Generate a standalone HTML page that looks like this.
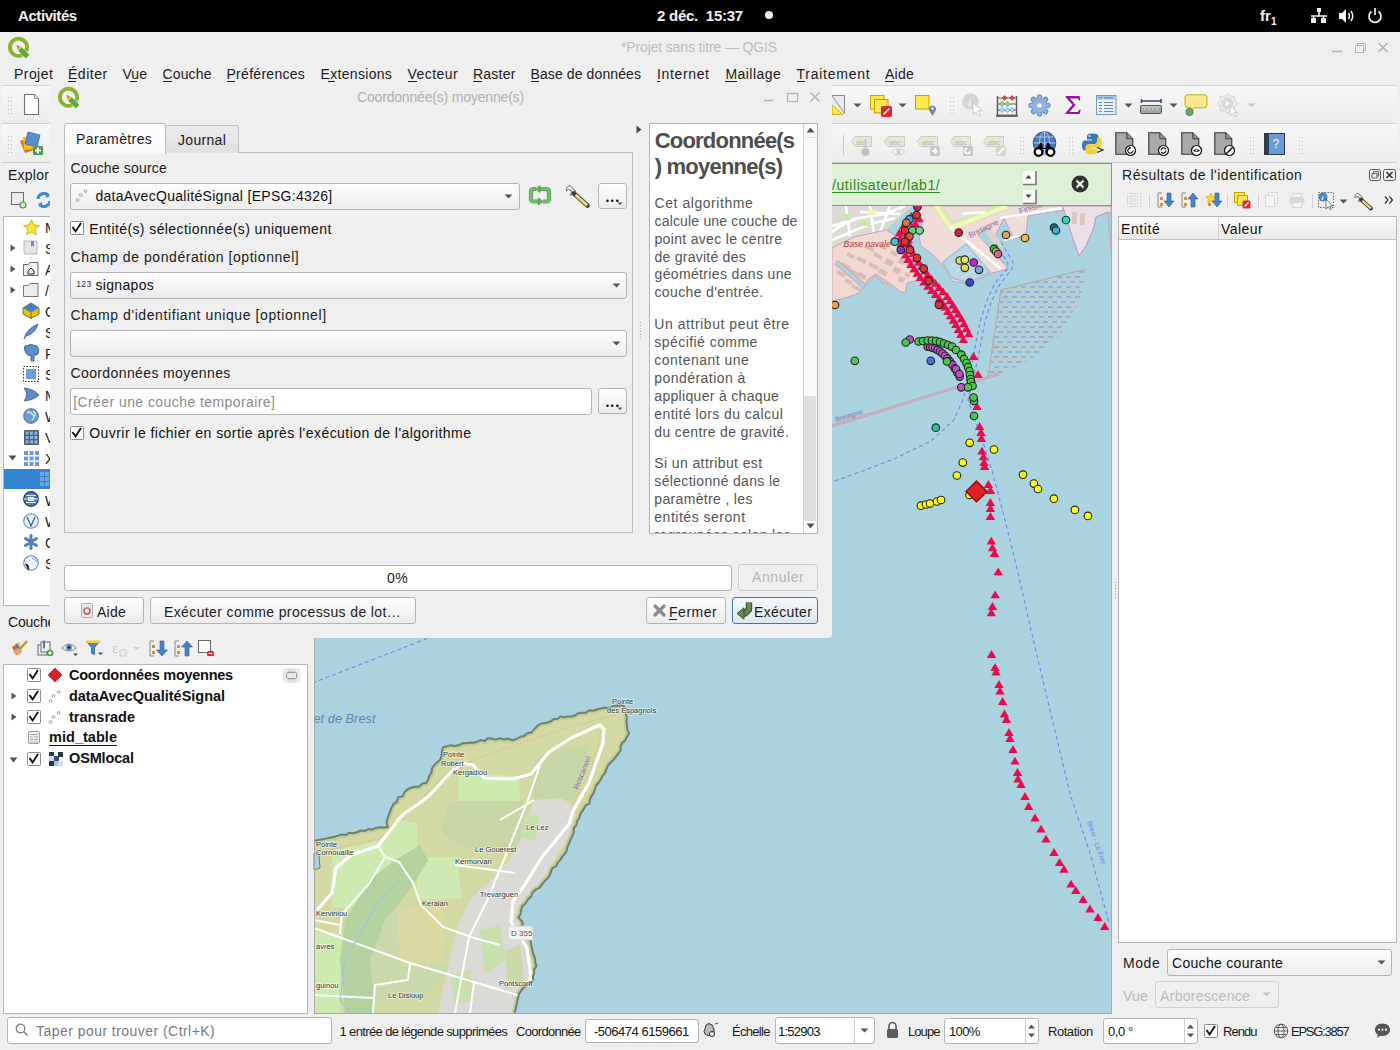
<!DOCTYPE html>
<html><head><meta charset="utf-8"><style>
html,body{margin:0;padding:0;width:1400px;height:1050px;overflow:hidden;background:#efefef;}
body{position:relative;font-family:"Liberation Sans",sans-serif;}
.t{position:absolute;white-space:nowrap;}
svg{position:absolute;overflow:visible;}
</style></head><body>
<div style="position:absolute;left:0px;top:0px;width:1400px;height:32px;background:#000;"></div>
<div class="t" style="left:18.00px;top:8.30px;font-size:15px;line-height:15px;color:#f2f2f2;font-weight:700;letter-spacing:-0.415px;">Activités</div>
<div class="t" style="left:657.00px;top:8.30px;font-size:15px;line-height:15px;color:#f2f2f2;font-weight:700;letter-spacing:-0.258px;white-space:pre;">2 déc.  15:37</div>
<div style="position:absolute;left:765px;top:11px;width:8px;height:8px;background:#eee;border-radius:50%;"></div>
<div class="t" style="left:1260.00px;top:8.30px;font-size:15px;line-height:15px;color:#f2f2f2;font-weight:700;letter-spacing:0.112px;">fr</div>
<div class="t" style="left:1271.00px;top:16.54px;font-size:10px;line-height:10px;color:#f2f2f2;font-weight:700;">1</div>
<svg style="left:1310px;top:7px" width="18" height="17" viewBox="0 0 18 17"><rect x="7" y="1" width="4" height="4" fill="#f2f2f2"/><rect x="1" y="11" width="5" height="5" fill="#f2f2f2"/><rect x="11" y="11" width="5" height="5" fill="#f2f2f2"/><path d="M9 5v4M1 9h16M3.5 9v3M13.5 9v3" stroke="#f2f2f2" stroke-width="1.6" fill="none"/></svg>
<svg style="left:1338px;top:8px" width="18" height="16" viewBox="0 0 18 16"><path d="M1 5h3l4-4v14l-4-4H1z" fill="#f2f2f2"/><path d="M10.5 5q2 3 0 6M13 3q3.5 5 0 10" stroke="#f2f2f2" stroke-width="1.5" fill="none"/></svg>
<svg style="left:1367px;top:7px" width="16" height="17" viewBox="0 0 16 17"><path d="M4.5 4.5a6 6 0 1 0 7 0" stroke="#f2f2f2" stroke-width="1.7" fill="none"/><path d="M8 1v7" stroke="#f2f2f2" stroke-width="1.7"/></svg>
<div style="position:absolute;left:0px;top:32px;width:1400px;height:1018px;background:#efefef;"></div>
<svg style="left:8px;top:37px" width="23" height="23" viewBox="0 0 23 23"><path d="M14.1 18.1A8.6 8.6 0 1 1 18.3 13.9" stroke="#89b52c" stroke-width="3.8" fill="none"/><path d="M8.6 8.1L13.8 10.2L21.4 17.8L17.8 21.4L10.2 13.8Z" fill="#62a744"/><path d="M8.6 8.1L11.9 9.4L9.4 11.9Z" fill="#ef7d22"/><path d="M11.9 9.4L13.8 10.2L10.2 13.8L9.4 11.9Z" fill="#f1d12c"/></svg>
<div class="t" style="left:621.00px;top:40.15px;font-size:14px;line-height:14px;color:#bdbdbd;letter-spacing:-0.143px;">*Projet sans titre — QGIS</div>
<svg style="left:1330px;top:40px" width="62" height="16" viewBox="0 0 62 16"><path d="M2 11.5h10" stroke="#b3b3b3" stroke-width="1.6"/><rect x="25.5" y="5.5" width="8" height="7" stroke="#b3b3b3" fill="none" stroke-width="1"/><path d="M27.5 5.5v-2h8v7h-2" stroke="#b3b3b3" fill="none" stroke-width="1"/><path d="M48.5 3l9 9M57.5 3l-9 9" stroke="#b3b3b3" stroke-width="1.6"/></svg>
<div class="t" style="left:14.00px;top:66.65px;font-size:14px;line-height:14px;color:#1b1b1b;letter-spacing:0.441px;">Projet</div>
<div class="t" style="left:68.00px;top:66.65px;font-size:14px;line-height:14px;color:#1b1b1b;letter-spacing:0.532px;">Éditer</div>
<div class="t" style="left:122.50px;top:66.65px;font-size:14px;line-height:14px;color:#1b1b1b;letter-spacing:0.044px;">Vue</div>
<div class="t" style="left:162.50px;top:66.65px;font-size:14px;line-height:14px;color:#1b1b1b;letter-spacing:0.135px;">Couche</div>
<div class="t" style="left:226.50px;top:66.65px;font-size:14px;line-height:14px;color:#1b1b1b;letter-spacing:0.287px;">Préférences</div>
<div class="t" style="left:320.50px;top:66.65px;font-size:14px;line-height:14px;color:#1b1b1b;letter-spacing:0.318px;">Extensions</div>
<div class="t" style="left:407.50px;top:66.65px;font-size:14px;line-height:14px;color:#1b1b1b;letter-spacing:0.465px;">Vecteur</div>
<div class="t" style="left:473.00px;top:66.65px;font-size:14px;line-height:14px;color:#1b1b1b;letter-spacing:0.230px;">Raster</div>
<div class="t" style="left:530.50px;top:66.65px;font-size:14px;line-height:14px;color:#1b1b1b;letter-spacing:0.105px;">Base de données</div>
<div class="t" style="left:657.00px;top:66.65px;font-size:14px;line-height:14px;color:#1b1b1b;letter-spacing:0.643px;">Internet</div>
<div class="t" style="left:725.40px;top:66.65px;font-size:14px;line-height:14px;color:#1b1b1b;letter-spacing:0.475px;">Maillage</div>
<div class="t" style="left:796.50px;top:66.65px;font-size:14px;line-height:14px;color:#1b1b1b;letter-spacing:0.748px;">Traitement</div>
<div class="t" style="left:885.00px;top:66.65px;font-size:14px;line-height:14px;color:#1b1b1b;letter-spacing:0.280px;">Aide</div>
<div style="position:absolute;left:34.5px;top:81px;width:4px;height:1px;box-sizing:border-box;background:#1b1b1b;"></div><div style="position:absolute;left:68px;top:81px;width:8px;height:1px;box-sizing:border-box;background:#1b1b1b;"></div><div style="position:absolute;left:130px;top:81px;width:7px;height:1px;box-sizing:border-box;background:#1b1b1b;"></div><div style="position:absolute;left:162.5px;top:81px;width:9px;height:1px;box-sizing:border-box;background:#1b1b1b;"></div><div style="position:absolute;left:226.5px;top:81px;width:8.5px;height:1px;box-sizing:border-box;background:#1b1b1b;"></div><div style="position:absolute;left:328px;top:81px;width:7px;height:1px;box-sizing:border-box;background:#1b1b1b;"></div><div style="position:absolute;left:407.5px;top:81px;width:9px;height:1px;box-sizing:border-box;background:#1b1b1b;"></div><div style="position:absolute;left:473px;top:81px;width:8.5px;height:1px;box-sizing:border-box;background:#1b1b1b;"></div><div style="position:absolute;left:530.5px;top:81px;width:8.5px;height:1px;box-sizing:border-box;background:#1b1b1b;"></div><div style="position:absolute;left:657px;top:81px;width:2.5px;height:1px;box-sizing:border-box;background:#1b1b1b;"></div><div style="position:absolute;left:725.4px;top:81px;width:12px;height:1px;box-sizing:border-box;background:#1b1b1b;"></div><div style="position:absolute;left:796.5px;top:81px;width:8.5px;height:1px;box-sizing:border-box;background:#1b1b1b;"></div><div style="position:absolute;left:885px;top:81px;width:9px;height:1px;box-sizing:border-box;background:#1b1b1b;"></div>
<div style="position:absolute;left:2px;top:85px;width:1395px;height:39px;box-sizing:border-box;background:linear-gradient(#f7f7f7,#ececec);border-top:1px solid #d2d2d2;border-bottom:1px solid #cfcfcf;"></div>
<div style="position:absolute;left:2px;top:124px;width:1395px;height:39px;box-sizing:border-box;background:linear-gradient(#f7f7f7,#ececec);border-bottom:1px solid #cfcfcf;"></div>
<svg style="left:8px;top:97px" width="5" height="20" viewBox="0 0 5 20"><rect x="0" y="0" width="1" height="1" fill="#b8b8b8"/><rect x="3" y="0" width="1" height="1" fill="#b8b8b8"/><rect x="0" y="4" width="1" height="1" fill="#b8b8b8"/><rect x="3" y="4" width="1" height="1" fill="#b8b8b8"/><rect x="0" y="8" width="1" height="1" fill="#b8b8b8"/><rect x="3" y="8" width="1" height="1" fill="#b8b8b8"/><rect x="0" y="12" width="1" height="1" fill="#b8b8b8"/><rect x="3" y="12" width="1" height="1" fill="#b8b8b8"/><rect x="0" y="16" width="1" height="1" fill="#b8b8b8"/><rect x="3" y="16" width="1" height="1" fill="#b8b8b8"/></svg>
<svg style="left:23px;top:93px" width="17" height="23" viewBox="0 0 17 23"><path d="M1.5 1.5h10l4 4v16h-14z" fill="#fff" stroke="#6e6e6e" stroke-width="1.1"/><path d="M11.5 1.5v4h4" fill="#e8e8e8" stroke="#8a8a8a" stroke-width="0.9"/></svg>
<svg style="left:8px;top:136px" width="5" height="20" viewBox="0 0 5 20"><rect x="0" y="0" width="1" height="1" fill="#b8b8b8"/><rect x="3" y="0" width="1" height="1" fill="#b8b8b8"/><rect x="0" y="4" width="1" height="1" fill="#b8b8b8"/><rect x="3" y="4" width="1" height="1" fill="#b8b8b8"/><rect x="0" y="8" width="1" height="1" fill="#b8b8b8"/><rect x="3" y="8" width="1" height="1" fill="#b8b8b8"/><rect x="0" y="12" width="1" height="1" fill="#b8b8b8"/><rect x="3" y="12" width="1" height="1" fill="#b8b8b8"/><rect x="0" y="16" width="1" height="1" fill="#b8b8b8"/><rect x="3" y="16" width="1" height="1" fill="#b8b8b8"/></svg>
<svg style="left:19px;top:131px" width="25" height="25" viewBox="0 0 25 25"><path d="M1 10l12-4 5 12-12 4z" fill="#e06a20"/><path d="M4 6l11-1 1 13-11 1z" fill="#f0c010"/><path d="M9 1l12 3-3 12-12-3z" fill="#5b8fd0" stroke="#3a6aa8" stroke-width="0.8"/><rect x="14" y="15" width="10" height="9" rx="1.5" fill="#4d9a4d"/><path d="M19 16.5v6M16 19.5h6" stroke="#fff" stroke-width="2"/></svg>
<svg style="left:832px;top:95px" width="14" height="21" viewBox="0 0 14 21"><path d="M0 0.5h12.5v17.5" fill="#ececec" stroke="#888" stroke-width="1"/><rect x="0" y="0.5" width="12.5" height="18" fill="#ebebeb"/><path d="M0 0.5h12.5v18" fill="none" stroke="#888" stroke-width="1"/><path d="M0 10l11 9.5H0z" fill="#fde84f" stroke="#c8a000" stroke-width="0.8"/><path d="M0 0.5l12.5 18" stroke="#888" stroke-width="0.9"/></svg>
<svg style="left:853px;top:103px" width="9" height="5" viewBox="0 0 9 5"><path d="M0.5 0.5h8l-4 4z" fill="#555"/></svg>
<svg style="left:870px;top:95px" width="23" height="23" viewBox="0 0 23 23"><rect x="0.5" y="0.5" width="13.5" height="13.5" fill="#fde84f" stroke="#c8a000"/><rect x="4.5" y="4.5" width="13.5" height="13.5" fill="#fde84f" stroke="#c8a000"/><rect x="11" y="11" width="11" height="11" rx="2" fill="#e02828"/><path d="M13.5 19.5l6-6" stroke="#fff" stroke-width="1.6"/></svg>
<svg style="left:898px;top:103px" width="9" height="5" viewBox="0 0 9 5"><path d="M0.5 0.5h8l-4 4z" fill="#555"/></svg>
<svg style="left:915px;top:95px" width="23" height="23" viewBox="0 0 23 23"><rect x="0.5" y="0.5" width="13.5" height="13.5" fill="#fde84f" stroke="#c8a000"/><path d="M17.5 21l-3-5a3.5 3.5 0 1 1 6 0z" fill="#6c8aa6"/><circle cx="17.5" cy="13.5" r="1.2" fill="#fff"/></svg>
<svg style="left:950px;top:97px" width="5" height="20" viewBox="0 0 5 20"><rect x="0" y="0" width="1" height="1" fill="#b8b8b8"/><rect x="3" y="0" width="1" height="1" fill="#b8b8b8"/><rect x="0" y="4" width="1" height="1" fill="#b8b8b8"/><rect x="3" y="4" width="1" height="1" fill="#b8b8b8"/><rect x="0" y="8" width="1" height="1" fill="#b8b8b8"/><rect x="3" y="8" width="1" height="1" fill="#b8b8b8"/><rect x="0" y="12" width="1" height="1" fill="#b8b8b8"/><rect x="3" y="12" width="1" height="1" fill="#b8b8b8"/><rect x="0" y="16" width="1" height="1" fill="#b8b8b8"/><rect x="3" y="16" width="1" height="1" fill="#b8b8b8"/></svg>
<svg style="left:962px;top:93px" width="25" height="24" viewBox="0 0 25 24"><circle cx="8.5" cy="8.5" r="8.3" fill="#d6d6d6"/><text x="6" y="13" font-size="11" font-style="italic" font-weight="700" fill="#f2f2f2" font-family="Liberation Serif">i</text><path d="M11 10l0 12 3-3 3 4.5 2-1.2-3-4.5h4.5z" fill="#fafafa" stroke="#c4c4c4" stroke-width="0.9"/></svg>
<svg style="left:996px;top:95px" width="22" height="22" viewBox="0 0 22 22"><path d="M1.5 1v20M20.5 1v20" stroke="#555" stroke-width="1.4"/><path d="M1.5 3h19M1.5 9h19M1.5 15h19" stroke="#666" stroke-width="1"/><rect x="0" y="19.5" width="22" height="2.5" rx="1" fill="#666"/><path d="M8.5 0.5l2.5 2.5-2.5 2.5-2.5-2.5z" fill="#e04848" stroke="#c02020" stroke-width="0.6"/><path d="M16 0.5l2.5 2.5-2.5 2.5-2.5-2.5z" fill="#e04848" stroke="#c02020" stroke-width="0.6"/><path d="M6 6.5l2.5 2.5-2.5 2.5-2.5-2.5z" fill="#90d090" stroke="#40a040" stroke-width="0.6"/><path d="M11.5 6.5l2.5 2.5-2.5 2.5-2.5-2.5z" fill="#90d090" stroke="#40a040" stroke-width="0.6"/><path d="M6 12.5l2.5 2.5-2.5 2.5-2.5-2.5z" fill="#b0d8f0" stroke="#5090c0" stroke-width="0.6"/><path d="M11.2 12.5l2.5 2.5-2.5 2.5-2.5-2.5z" fill="#b0d8f0" stroke="#5090c0" stroke-width="0.6"/><path d="M16.3 12.5l2.5 2.5-2.5 2.5-2.5-2.5z" fill="#b0d8f0" stroke="#5090c0" stroke-width="0.6"/></svg>
<svg style="left:1028px;top:93.5px" width="23" height="23" viewBox="0 0 23 23"><g fill="#8db2e2" stroke="#4a86d0" stroke-width="1"><rect x="9.3" y="0.8" width="4.4" height="6" rx="2" transform="rotate(0 11.5 11.5)"/><rect x="9.3" y="0.8" width="4.4" height="6" rx="2" transform="rotate(45 11.5 11.5)"/><rect x="9.3" y="0.8" width="4.4" height="6" rx="2" transform="rotate(90 11.5 11.5)"/><rect x="9.3" y="0.8" width="4.4" height="6" rx="2" transform="rotate(135 11.5 11.5)"/><rect x="9.3" y="0.8" width="4.4" height="6" rx="2" transform="rotate(180 11.5 11.5)"/><rect x="9.3" y="0.8" width="4.4" height="6" rx="2" transform="rotate(225 11.5 11.5)"/><rect x="9.3" y="0.8" width="4.4" height="6" rx="2" transform="rotate(270 11.5 11.5)"/><rect x="9.3" y="0.8" width="4.4" height="6" rx="2" transform="rotate(315 11.5 11.5)"/></g><circle cx="11.5" cy="11.5" r="7.2" fill="#8db2e2"/><circle cx="11.5" cy="11.5" r="2.3" fill="#fff"/></svg>
<svg style="left:1065px;top:95px" width="16" height="20" viewBox="0 0 16 20"><path d="M1 1h13.5l0.8 4.5h-1.5L13 3.5H5l5.5 6.5L4.5 17h8.5l1.5-2.5h1.3L14.5 19H0.5v-1l7-8.2L0.5 2z" fill="#9b0fa5"/></svg>
<svg style="left:1096px;top:94.5px" width="21" height="21" viewBox="0 0 21 21"><rect x="0.5" y="0.5" width="19.5" height="19" fill="#f0f0f0" stroke="#6b9bd3"/><rect x="1" y="1" width="18.5" height="3.5" fill="#a8c8ec"/><path d="M3 2.8h3M8 2.8h9" stroke="#5a8ac3" stroke-width="1.2"/><path d="M3 7.5h3M8 7.5h9" stroke="#5a8ac3" stroke-width="1.1"/><path d="M3 10.5h3M8 10.5h9" stroke="#5a8ac3" stroke-width="1.1"/><path d="M3 13.5h3M8 13.5h9" stroke="#5a8ac3" stroke-width="1.1"/><path d="M3 16.5h3M8 16.5h9" stroke="#5a8ac3" stroke-width="1.1"/></svg>
<svg style="left:1124px;top:103px" width="9" height="5" viewBox="0 0 9 5"><path d="M0.5 0.5h8l-4 4z" fill="#555"/></svg>
<svg style="left:1140px;top:97.5px" width="23" height="17" viewBox="0 0 23 17"><path d="M1.5 1v4M21 1v4M1.5 3h19.5" stroke="#2a4a7a" stroke-width="1.5"/><rect x="0.5" y="7.5" width="21" height="8" rx="0.8" fill="#a6a6a6" stroke="#555" stroke-width="1"/><path d="M3 8v2" stroke="#f2f2f2" stroke-width="0.7"/><path d="M5 8v4" stroke="#f2f2f2" stroke-width="0.7"/><path d="M7 8v2" stroke="#f2f2f2" stroke-width="0.7"/><path d="M9 8v4" stroke="#f2f2f2" stroke-width="0.7"/><path d="M11 8v2" stroke="#f2f2f2" stroke-width="0.7"/><path d="M13 8v4" stroke="#f2f2f2" stroke-width="0.7"/><path d="M15 8v2" stroke="#f2f2f2" stroke-width="0.7"/><path d="M17 8v4" stroke="#f2f2f2" stroke-width="0.7"/><path d="M19 8v2" stroke="#f2f2f2" stroke-width="0.7"/></svg>
<svg style="left:1169px;top:103px" width="9" height="5" viewBox="0 0 9 5"><path d="M0.5 0.5h8l-4 4z" fill="#555"/></svg>
<svg style="left:1185px;top:93.5px" width="23" height="23" viewBox="0 0 23 23"><path d="M3 0.8h16a3 3 0 0 1 3 3v7a3 3 0 0 1-3 3H9l-4 4 1-4H3a3 3 0 0 1-3-3v-7a3 3 0 0 1 3-3z" fill="#fbe98c" stroke="#c9a910" stroke-width="1"/><circle cx="4.5" cy="18" r="3.6" fill="#6aa86a" stroke="#3e6e3e" stroke-width="0.8"/></svg>
<svg style="left:1217px;top:93px" width="25" height="25" viewBox="0 0 25 25"><polygon points="20.50,10.50 17.89,13.56 17.57,17.57 13.56,17.89 10.50,20.50 7.44,17.89 3.43,17.57 3.11,13.56 0.50,10.50 3.11,7.44 3.43,3.43 7.44,3.11 10.50,0.50 13.56,3.11 17.57,3.43 17.89,7.44" fill="#ececec" stroke="#d0d0d0" stroke-width="1"/><circle cx="10.5" cy="10.5" r="6" fill="#d8d8d8"/><path d="M8.5 7.5v6l5-3z" fill="#f4f4f4"/><path d="M13 13l0 10 2.5-2.5 2.5 3.5 1.6-1-2.4-3.6h3.5z" fill="#fafafa" stroke="#c8c8c8" stroke-width="0.9"/></svg>
<svg style="left:1247px;top:103px" width="9" height="5" viewBox="0 0 9 5"><path d="M0.5 0.5h8l-4 4z" fill="#c8c8c8"/></svg>
<div style="position:absolute;left:843px;top:135px;width:1px;height:20px;background:#c8c8c8"></div>
<svg style="left:851px;top:135.5px" width="24" height="21" viewBox="0 0 24 21"><path d="M4 0.5h16.5v10H4L0.5 5.5z" fill="#e8e6da" stroke="#cfcdbf" stroke-width="1"/><text x="5" y="8.5" font-size="7.5" fill="#b8b6a8" font-family="Liberation Sans">ab</text><path d="M14.5 3v9" stroke="#c8c6c6" stroke-width="1.8"/><circle cx="14.5" cy="16" r="4" fill="#c8bcbc"/></svg>
<svg style="left:884px;top:135.5px" width="24" height="21" viewBox="0 0 24 21"><path d="M4 0.5h16.5v10H4L0.5 5.5z" fill="#e8e6da" stroke="#cfcdbf" stroke-width="1"/><text x="5" y="8.5" font-size="7.5" fill="#b8b6a8" font-family="Liberation Sans">abc</text><path d="M8 16q6-6 13 0q-7 6-13 0z" fill="#f4f4f4" stroke="#c8c8c8" stroke-width="0.9"/><circle cx="14.5" cy="16" r="2" fill="#c8c8c8"/></svg>
<svg style="left:917px;top:135.5px" width="24" height="21" viewBox="0 0 24 21"><path d="M4 0.5h16.5v10H4L0.5 5.5z" fill="#e8e6da" stroke="#cfcdbf" stroke-width="1"/><text x="5" y="8.5" font-size="7.5" fill="#b8b6a8" font-family="Liberation Sans">abc</text><rect x="13" y="10" width="10" height="10" rx="1.5" fill="#c8c8c8"/><path d="M15 15h4M17.5 12.5l2.5 2.5-2.5 2.5" stroke="#fff" stroke-width="1.8" fill="none"/></svg>
<svg style="left:950px;top:135.5px" width="24" height="21" viewBox="0 0 24 21"><path d="M4 0.5h16.5v10H4L0.5 5.5z" fill="#e8e6da" stroke="#cfcdbf" stroke-width="1"/><text x="5" y="8.5" font-size="7.5" fill="#b8b6a8" font-family="Liberation Sans">abc</text><rect x="13" y="10" width="10" height="10" rx="1.5" fill="#c8c8c8"/><path d="M20 15a2.5 2.5 0 1 1-2.5-2.5" stroke="#fff" stroke-width="1.6" fill="none"/></svg>
<svg style="left:983px;top:135.5px" width="24" height="21" viewBox="0 0 24 21"><path d="M4 0.5h16.5v10H4L0.5 5.5z" fill="#e8e6da" stroke="#cfcdbf" stroke-width="1"/><text x="5" y="8.5" font-size="7.5" fill="#b8b6a8" font-family="Liberation Sans">abc</text><rect x="13" y="10" width="10" height="10" rx="1.5" fill="#d6d4c4"/><path d="M15 18l6-6" stroke="#fff" stroke-width="1.8"/></svg>
<svg style="left:1020px;top:137px" width="5" height="20" viewBox="0 0 5 20"><rect x="0" y="0" width="1" height="1" fill="#b8b8b8"/><rect x="3" y="0" width="1" height="1" fill="#b8b8b8"/><rect x="0" y="4" width="1" height="1" fill="#b8b8b8"/><rect x="3" y="4" width="1" height="1" fill="#b8b8b8"/><rect x="0" y="8" width="1" height="1" fill="#b8b8b8"/><rect x="3" y="8" width="1" height="1" fill="#b8b8b8"/><rect x="0" y="12" width="1" height="1" fill="#b8b8b8"/><rect x="3" y="12" width="1" height="1" fill="#b8b8b8"/><rect x="0" y="16" width="1" height="1" fill="#b8b8b8"/><rect x="3" y="16" width="1" height="1" fill="#b8b8b8"/></svg>
<svg style="left:1031.5px;top:131px" width="26" height="26" viewBox="0 0 26 26"><circle cx="12.5" cy="12" r="11.3" fill="#4a7cbc" stroke="#2a4e80" stroke-width="1"/><path d="M1.5 12h22M12.5 1v22M3.5 6h18M3.5 18h18" stroke="#bcd4f0" stroke-width="0.8"/><ellipse cx="12.5" cy="12" rx="5" ry="11" fill="none" stroke="#bcd4f0" stroke-width="0.8"/><circle cx="6.5" cy="21" r="3.8" fill="#fff" stroke="#000" stroke-width="2.2"/><circle cx="18.5" cy="21" r="3.8" fill="#fff" stroke="#000" stroke-width="2.2"/><path d="M5 18l3-6h2l1 5h3l1-5h2l3 6" fill="#000"/></svg>
<svg style="left:1069px;top:137px" width="5" height="20" viewBox="0 0 5 20"><rect x="0" y="0" width="1" height="1" fill="#b8b8b8"/><rect x="3" y="0" width="1" height="1" fill="#b8b8b8"/><rect x="0" y="4" width="1" height="1" fill="#b8b8b8"/><rect x="3" y="4" width="1" height="1" fill="#b8b8b8"/><rect x="0" y="8" width="1" height="1" fill="#b8b8b8"/><rect x="3" y="8" width="1" height="1" fill="#b8b8b8"/><rect x="0" y="12" width="1" height="1" fill="#b8b8b8"/><rect x="3" y="12" width="1" height="1" fill="#b8b8b8"/><rect x="0" y="16" width="1" height="1" fill="#b8b8b8"/><rect x="3" y="16" width="1" height="1" fill="#b8b8b8"/></svg>
<svg style="left:1082px;top:133px" width="23" height="23" viewBox="0 0 23 23"><path d="M10 0.5c-4 0-5 1.5-5 3.5v2.5h5v1H3c-2 0-3 1.8-3 5s1 5 3 5h2v-3c0-2 1.5-3.5 3.5-3.5h5c1.8 0 3-1.2 3-3V4c0-2-1.5-3.5-5-3.5z" fill="#3b78b0"/><path d="M11 21c4 0 5-1.5 5-3.5V15h-5v-1h7c2 0 3-1.8 3-5" fill="none"/><path d="M9 21.5c4 0 6-1.3 6-3.3v-2.5h-5v-1h7c2 0 3-1.8 3-5s-1-5-3-5h-2v3c0 2-1.5 3.5-3.5 3.5h-5c-1.8 0-3 1.2-3 3v3.7c0 2 1.5 3.6 5.5 3.6z" fill="#f7cf3c"/><circle cx="7.5" cy="3" r="0.9" fill="#fff"/><path d="M15 14.5l6 2.5-6 2.5" stroke="#222" stroke-width="1.2" fill="none"/></svg>
<svg style="left:1115.0px;top:131.5px" width="22" height="25" viewBox="0 0 22 25"><path d="M0.8 0.8h11l6 6v15.5h-17z" fill="#a9a9a9" stroke="#333" stroke-width="1.1"/><path d="M11.8 0.8v6h6" fill="#7a9aaa" stroke="#333" stroke-width="0.9"/><circle cx="15.5" cy="18.5" r="5" fill="#fff" stroke="#111" stroke-width="1.2"/><path d="M18 18.5a2.6 2.6 0 1 1-2.5-2.6" stroke="#111" stroke-width="1.1" fill="none"/><path d="M13.5 14.5l2 1.4-1.8 1.5" fill="none" stroke="#111" stroke-width="1"/></svg>
<svg style="left:1148.1px;top:131.5px" width="22" height="25" viewBox="0 0 22 25"><path d="M0.8 0.8h11l6 6v15.5h-17z" fill="#a9a9a9" stroke="#333" stroke-width="1.1"/><path d="M11.8 0.8v6h6" fill="#7a9aaa" stroke="#333" stroke-width="0.9"/><circle cx="15.5" cy="18.5" r="5" fill="#fff" stroke="#111" stroke-width="1.2"/><path d="M13 18.5a2.6 2.6 0 0 1 4.8-1.4M18 18.5a2.6 2.6 0 0 1-4.8 1.4" stroke="#111" stroke-width="1.1" fill="none"/></svg>
<svg style="left:1181.2px;top:131.5px" width="22" height="25" viewBox="0 0 22 25"><path d="M0.8 0.8h11l6 6v15.5h-17z" fill="#a9a9a9" stroke="#333" stroke-width="1.1"/><path d="M11.8 0.8v6h6" fill="#7a9aaa" stroke="#333" stroke-width="0.9"/><circle cx="15.5" cy="18.5" r="5" fill="#fff" stroke="#111" stroke-width="1.2"/><path d="M12 18.5q3.5-3 7 0q-3.5 3-7 0z" fill="#111"/><circle cx="15.5" cy="18.5" r="1" fill="#fff"/></svg>
<svg style="left:1214.3px;top:131.5px" width="22" height="25" viewBox="0 0 22 25"><path d="M0.8 0.8h11l6 6v15.5h-17z" fill="#a9a9a9" stroke="#333" stroke-width="1.1"/><path d="M11.8 0.8v6h6" fill="#7a9aaa" stroke="#333" stroke-width="0.9"/><circle cx="15.5" cy="18.5" r="5" fill="#fff" stroke="#111" stroke-width="1.2"/><path d="M12.5 21.5l6-6" stroke="#111" stroke-width="1.4"/></svg>
<svg style="left:1250px;top:137px" width="5" height="20" viewBox="0 0 5 20"><rect x="0" y="0" width="1" height="1" fill="#b8b8b8"/><rect x="3" y="0" width="1" height="1" fill="#b8b8b8"/><rect x="0" y="4" width="1" height="1" fill="#b8b8b8"/><rect x="3" y="4" width="1" height="1" fill="#b8b8b8"/><rect x="0" y="8" width="1" height="1" fill="#b8b8b8"/><rect x="3" y="8" width="1" height="1" fill="#b8b8b8"/><rect x="0" y="12" width="1" height="1" fill="#b8b8b8"/><rect x="3" y="12" width="1" height="1" fill="#b8b8b8"/><rect x="0" y="16" width="1" height="1" fill="#b8b8b8"/><rect x="3" y="16" width="1" height="1" fill="#b8b8b8"/></svg>
<svg style="left:1263.5px;top:132.5px" width="21" height="22" viewBox="0 0 21 22"><rect x="0.5" y="0.5" width="20" height="21" fill="#6a9ad2" stroke="#2b3a4e" stroke-width="1"/><rect x="0.5" y="0.5" width="4.5" height="21" fill="#2d3d52"/><text x="8.5" y="15" font-size="12" fill="#fff" font-family="Liberation Sans">?</text></svg>
<svg style="left:1299px;top:137px" width="5" height="20" viewBox="0 0 5 20"><rect x="0" y="0" width="1" height="1" fill="#b8b8b8"/><rect x="3" y="0" width="1" height="1" fill="#b8b8b8"/><rect x="0" y="4" width="1" height="1" fill="#b8b8b8"/><rect x="3" y="4" width="1" height="1" fill="#b8b8b8"/><rect x="0" y="8" width="1" height="1" fill="#b8b8b8"/><rect x="3" y="8" width="1" height="1" fill="#b8b8b8"/><rect x="0" y="12" width="1" height="1" fill="#b8b8b8"/><rect x="3" y="12" width="1" height="1" fill="#b8b8b8"/><rect x="0" y="16" width="1" height="1" fill="#b8b8b8"/><rect x="3" y="16" width="1" height="1" fill="#b8b8b8"/></svg>
<div class="t" style="left:8.00px;top:167.65px;font-size:14px;line-height:14px;color:#1b1b1b;letter-spacing:0.240px;">Explor</div>
<svg style="left:11px;top:192px" width="16" height="17" viewBox="0 0 16 17"><rect x="0.5" y="0.5" width="12" height="12" fill="#ececec" stroke="#6a6a6a" stroke-width="1"/><circle cx="12" cy="13" r="3" fill="#d6ead6" stroke="#4a9a4a" stroke-width="1.2"/></svg>
<svg style="left:36px;top:192px" width="16" height="16" viewBox="0 0 16 16"><path d="M2 7a6 6 0 0 1 10.5-3.5M14 9a6 6 0 0 1-10.5 3.5" stroke="#3b8ad8" stroke-width="3" fill="none"/><path d="M10 1l4 3-4 2z M6 15l-4-3 4-2z" fill="#3b8ad8"/></svg>
<div style="position:absolute;left:3px;top:216px;width:60px;height:390px;box-sizing:border-box;background:#fff;border:1px solid #b5b5b5;"></div>
<div class="t" style="left:45.00px;top:220.65px;font-size:14px;line-height:14px;color:#1b1b1b;">Mxxxx</div>
<div class="t" style="left:45.00px;top:241.65px;font-size:14px;line-height:14px;color:#1b1b1b;">Sxxxx</div>
<div class="t" style="left:45.00px;top:262.65px;font-size:14px;line-height:14px;color:#1b1b1b;">Axxxx</div>
<div class="t" style="left:45.00px;top:283.65px;font-size:14px;line-height:14px;color:#1b1b1b;">/home</div>
<div class="t" style="left:45.00px;top:304.65px;font-size:14px;line-height:14px;color:#1b1b1b;">Gxxxx</div>
<div class="t" style="left:45.00px;top:325.65px;font-size:14px;line-height:14px;color:#1b1b1b;">Sxxxx</div>
<div class="t" style="left:45.00px;top:346.65px;font-size:14px;line-height:14px;color:#1b1b1b;">Pxxxx</div>
<div class="t" style="left:45.00px;top:367.65px;font-size:14px;line-height:14px;color:#1b1b1b;">Sxxxx</div>
<div class="t" style="left:45.00px;top:388.65px;font-size:14px;line-height:14px;color:#1b1b1b;">Mxxxx</div>
<div class="t" style="left:45.00px;top:409.65px;font-size:14px;line-height:14px;color:#1b1b1b;">Wxxxx</div>
<div class="t" style="left:45.00px;top:430.65px;font-size:14px;line-height:14px;color:#1b1b1b;">Vxxxx</div>
<div class="t" style="left:45.00px;top:451.65px;font-size:14px;line-height:14px;color:#1b1b1b;">Xxxxx</div>
<div class="t" style="left:45.00px;top:493.65px;font-size:14px;line-height:14px;color:#1b1b1b;">Wxxxx</div>
<div class="t" style="left:45.00px;top:514.65px;font-size:14px;line-height:14px;color:#1b1b1b;">Wxxxx</div>
<div class="t" style="left:45.00px;top:535.65px;font-size:14px;line-height:14px;color:#1b1b1b;">Cxxxx</div>
<div class="t" style="left:45.00px;top:556.65px;font-size:14px;line-height:14px;color:#1b1b1b;">Sxxxx</div>
<div style="position:absolute;left:4px;top:469px;width:60px;height:20px;box-sizing:border-box;background:#3584d2;"></div>
<svg style="left:40px;top:471px" width="12" height="16" viewBox="0 0 12 16"><g fill="#6fa6dd"><rect x="0" y="1" width="4" height="4"/><rect x="5" y="1" width="4" height="4"/><rect x="0" y="6" width="4" height="4"/><rect x="5" y="6" width="4" height="4"/><rect x="0" y="11" width="4" height="4"/><rect x="5" y="11" width="4" height="4"/></g></svg>
<svg style="left:10px;top:244px" width="6" height="8" viewBox="0 0 6 8"><path d="M0.5 0.5l5 3.5-5 3.5z" fill="#555"/></svg>
<svg style="left:10px;top:265px" width="6" height="8" viewBox="0 0 6 8"><path d="M0.5 0.5l5 3.5-5 3.5z" fill="#555"/></svg>
<svg style="left:10px;top:286px" width="6" height="8" viewBox="0 0 6 8"><path d="M0.5 0.5l5 3.5-5 3.5z" fill="#555"/></svg>
<svg style="left:8px;top:455px" width="9" height="6" viewBox="0 0 9 6"><path d="M0.5 0.5h8l-4 5z" fill="#555"/></svg>
<svg style="left:22.5px;top:219px" width="17" height="17" viewBox="0 0 17 17"><path d="M8.5 0.8l2.3 5.2 5.6 0.5-4.3 3.7 1.3 5.5-4.9-2.9-4.9 2.9 1.3-5.5L0.6 6.5l5.6-0.5z" fill="#f7e23a" stroke="#c9a800" stroke-width="0.9"/></svg>
<svg style="left:23px;top:240px" width="16" height="15" viewBox="0 0 16 15"><path d="M1 1h13v13H3a2 2 0 0 1-2-2z" fill="#e6e6e6" stroke="#b8b8b8"/><path d="M8 1v6l1.5-1.5L11 7V1" fill="#6a8ed0"/></svg>
<svg style="left:23px;top:261px" width="16" height="16" viewBox="0 0 16 16"><path d="M0.5 3.5h5l1.5-2h8v13h-14.5z" fill="#f2f2f2" stroke="#5a5a5a" stroke-width="0.9"/><path d="M5 10l3-3 3 3v3H5z" fill="none" stroke="#222" stroke-width="1"/></svg>
<svg style="left:23px;top:282px" width="16" height="16" viewBox="0 0 16 16"><path d="M0.5 3.5h5l1.5-2h8v13h-14.5z" fill="#ececec" stroke="#6a6a6a" stroke-width="0.9"/></svg>
<svg style="left:22px;top:302px" width="18" height="17" viewBox="0 0 18 17"><path d="M1 6l8-5 8 5v6l-8 4.5-8-4.5z" fill="#e8c400" stroke="#555" stroke-width="0.8"/><path d="M1 6l8 4.5 8-4.5-8-5z" fill="#4c7fc0"/><path d="M9 10.5v6" stroke="#555" stroke-width="0.8"/></svg>
<svg style="left:23px;top:323px" width="16" height="17" viewBox="0 0 16 17"><path d="M1 16q2-10 14-15q-3 10-12 12z" fill="#5f8fd0" stroke="#3a5f90" stroke-width="0.8"/></svg>
<svg style="left:22px;top:344px" width="18" height="18" viewBox="0 0 18 18"><path d="M3 2q6-3 12 0q3 3 1 8q-2 2-4 1v6h-3v-6q-3 2-5-2q-3-4-1-7z" fill="#5d8fc8" stroke="#2e5a8a" stroke-width="0.8"/></svg>
<svg style="left:23px;top:366px" width="16" height="16" viewBox="0 0 16 16"><rect x="3" y="3" width="10" height="10" fill="#6e9ed6"/><rect x="0.5" y="0.5" width="15" height="15" fill="none" stroke="#333" stroke-dasharray="1.5 1.5" stroke-width="1"/></svg>
<svg style="left:23px;top:387px" width="17" height="15" viewBox="0 0 17 15"><path d="M1 1q10 1 15 7q-5 5-15 6q5-6 0-13z" fill="#5b8cc6" stroke="#3a5f90" stroke-width="0.8"/></svg>
<svg style="left:23px;top:408px" width="16" height="16" viewBox="0 0 16 16"><circle cx="8" cy="8" r="7.3" fill="#6e9bd3" stroke="#3a6aa8" stroke-width="1"/><path d="M4 5q2-2 4 0t3 3-2 4M10 3q3 2 2 5" stroke="#dfeaf6" stroke-width="1.3" fill="none"/></svg>
<svg style="left:24px;top:430px" width="15" height="15" viewBox="0 0 15 15"><rect x="0" y="0" width="15" height="15" rx="1" fill="#4a5c70"/><g fill="#8fb0d8"><rect x="1.5" y="1.5" width="3.2" height="3.2"/><rect x="5.9" y="1.5" width="3.2" height="3.2"/><rect x="10.3" y="1.5" width="3.2" height="3.2"/><rect x="1.5" y="5.9" width="3.2" height="3.2"/><rect x="5.9" y="5.9" width="3.2" height="3.2"/><rect x="10.3" y="5.9" width="3.2" height="3.2"/><rect x="1.5" y="10.3" width="3.2" height="3.2"/><rect x="5.9" y="10.3" width="3.2" height="3.2"/><rect x="10.3" y="10.3" width="3.2" height="3.2"/></g></svg>
<svg style="left:24px;top:451px" width="15" height="15" viewBox="0 0 15 15"><g fill="#6a9ad6"><rect x="0" y="0" width="4" height="4"/><rect x="5.5" y="0" width="4" height="4"/><rect x="11" y="0" width="4" height="4"/><rect x="0" y="5.5" width="4" height="4"/><rect x="5.5" y="5.5" width="4" height="4"/><rect x="11" y="5.5" width="4" height="4"/><rect x="0" y="11" width="4" height="4"/><rect x="5.5" y="11" width="4" height="4"/><rect x="11" y="11" width="4" height="4"/></g></svg>
<svg style="left:23px;top:491px" width="16" height="16" viewBox="0 0 16 16"><circle cx="8" cy="8" r="7.3" fill="#4f7cb8" stroke="#1e3556" stroke-width="1.2"/><path d="M1 8h14M3 4.5h10M3 11.5h10" stroke="#dfeaf6" stroke-width="1.1"/><rect x="5" y="6" width="6" height="4" fill="#dfeaf6"/></svg>
<svg style="left:23px;top:513px" width="16" height="16" viewBox="0 0 16 16"><circle cx="8" cy="8" r="7.3" fill="#eaf1fa" stroke="#5b8cc6" stroke-width="1.1"/><path d="M4 4l4 9 4-9" stroke="#3a5f90" stroke-width="1.3" fill="none"/></svg>
<svg style="left:23px;top:534px" width="16" height="16" viewBox="0 0 16 16"><g stroke="#4f7fbf" stroke-width="3" stroke-linecap="round"><path d="M8 1.5v13M2.5 4.5l11 7M2.5 11.5l11-7"/></g><circle cx="8" cy="8" r="2.5" fill="#4f7fbf"/></svg>
<svg style="left:23px;top:555px" width="16" height="16" viewBox="0 0 16 16"><circle cx="8" cy="8" r="7.3" fill="#eef3fa" stroke="#5b8cc6" stroke-width="1.1"/><path d="M2 9q3-1 4 3t-1 3" fill="#333"/><path d="M9 3q3 1 5 4" stroke="#5b8cc6" fill="none"/></svg>
<div class="t" style="left:8.00px;top:615.15px;font-size:14px;line-height:14px;color:#1b1b1b;letter-spacing:-0.193px;">Couches</div>
<svg style="left:11px;top:640px" width="17" height="16" viewBox="0 0 17 16"><path d="M1 7l6-3 4 8-6 3z" fill="#e65a3a"/><path d="M3 5l5-3 3 6" fill="#f0c020"/><path d="M5 4l4 7" stroke="#3a7ad0" stroke-width="2"/><path d="M8 10l8-9" stroke="#c8923a" stroke-width="2.4"/><path d="M2 12l6 3 3-4-5-3z" fill="#d9a870"/></svg>
<svg style="left:37px;top:640px" width="17" height="17" viewBox="0 0 17 17"><rect x="1" y="5" width="9" height="10" fill="none" stroke="#666"/><rect x="4" y="2" width="9" height="10" fill="#f2f2f2" stroke="#666"/><path d="M7 0.5v8" stroke="#4a78b8" stroke-width="2"/><circle cx="13" cy="13" r="3.3" fill="#4e9a4e"/><path d="M13 11v4M11 13h4" stroke="#fff" stroke-width="1.2"/></svg>
<svg style="left:61px;top:641px" width="18" height="16" viewBox="0 0 18 16"><path d="M0.5 7q8-8 15 0q-7 6-15 0z" fill="#f0f0f0" stroke="#8a8a8a"/><circle cx="8" cy="6.5" r="3" fill="#4a8ad8"/><circle cx="8" cy="6.5" r="1.2" fill="#222"/><path d="M12 12.5h5l-2.5 2.5z" fill="#444"/></svg>
<svg style="left:86px;top:640px" width="18" height="17" viewBox="0 0 18 17"><path d="M0.5 1.5h13l-5 6v7l-3-1v-6z" fill="#4a88c8" stroke="#2e5e98" stroke-width="0.8"/><rect x="0.5" y="0.5" width="13" height="2.5" fill="#f2d02a"/><path d="M12 12.5h5l-2.5 2.5z" fill="#444"/></svg>
<svg style="left:112px;top:640px" width="30" height="17" viewBox="0 0 30 17"><text x="0" y="13" font-size="15" fill="#c8c8c8" font-family="Liberation Serif">ε</text><path d="M8 10h6v6H8z" fill="none" stroke="#d0d0d0"/><path d="M21 7h7l-3.5 3z" fill="#cfcfcf"/></svg>
<svg style="left:149px;top:640px" width="17" height="17" viewBox="0 0 17 17"><path d="M1 1h4M1 1v15h4" stroke="#888" fill="none"/><rect x="3" y="5" width="3" height="3" fill="#f08a10"/><rect x="3" y="11" width="3" height="3" fill="#f08a10"/><path d="M11 1v9h-3.5l5.5 6 5.5-6H15V1z" fill="#4a82c8" stroke="#2a5a98" stroke-width="0.6"/></svg>
<svg style="left:174px;top:640px" width="17" height="17" viewBox="0 0 17 17"><path d="M1 1h4M1 1v15h4" stroke="#888" fill="none"/><rect x="3" y="5" width="3" height="3" fill="#f08a10"/><rect x="3" y="11" width="3" height="3" fill="#f08a10"/><path d="M11 16V7H7.5L13 1l5.5 6H15v9z" fill="#4a82c8" stroke="#2a5a98" stroke-width="0.6"/></svg>
<svg style="left:198px;top:640px" width="17" height="17" viewBox="0 0 17 17"><rect x="0.5" y="0.5" width="12" height="12" fill="#fff" stroke="#666"/><rect x="9" y="11" width="7" height="5" rx="1.5" fill="#e02828"/><path d="M10.5 13.5h4" stroke="#fff" stroke-width="1.2"/></svg>
<div style="position:absolute;left:3px;top:664px;width:305px;height:350px;box-sizing:border-box;background:#fff;border:1px solid #b5b5b5;"></div>
<div class="t" style="left:69.00px;top:668.33px;font-size:14.5px;line-height:14.5px;color:#111;font-weight:700;letter-spacing:-0.267px;">Coordonnées moyennes</div>
<div class="t" style="left:69.00px;top:689.03px;font-size:14.5px;line-height:14.5px;color:#111;font-weight:700;letter-spacing:-0.029px;">dataAvecQualitéSignal</div>
<div class="t" style="left:69.00px;top:709.73px;font-size:14.5px;line-height:14.5px;color:#111;font-weight:700;letter-spacing:-0.010px;">transrade</div>
<div class="t" style="left:49.00px;top:730.43px;font-size:14.5px;line-height:14.5px;color:#111;font-weight:700;letter-spacing:0.037px;">mid_table</div>
<div class="t" style="left:69.00px;top:751.13px;font-size:14.5px;line-height:14.5px;color:#111;font-weight:700;letter-spacing:-0.143px;">OSMlocal</div>
<div style="position:absolute;left:49px;top:745px;width:68px;height:1px;box-sizing:border-box;background:#111;"></div>
<svg style="left:27px;top:668px" width="14" height="14" viewBox="0 0 14 14"><rect x="0.5" y="0.5" width="13" height="13" rx="1" fill="#fff" stroke="#8c8c8c" stroke-width="1"/><path d="M3 6.8l2.6 3.6L10.5 2.8" stroke="#111" stroke-width="1.9" fill="none" stroke-linecap="square"/></svg>
<svg style="left:27px;top:689px" width="14" height="14" viewBox="0 0 14 14"><rect x="0.5" y="0.5" width="13" height="13" rx="1" fill="#fff" stroke="#8c8c8c" stroke-width="1"/><path d="M3 6.8l2.6 3.6L10.5 2.8" stroke="#111" stroke-width="1.9" fill="none" stroke-linecap="square"/></svg>
<svg style="left:27px;top:710px" width="14" height="14" viewBox="0 0 14 14"><rect x="0.5" y="0.5" width="13" height="13" rx="1" fill="#fff" stroke="#8c8c8c" stroke-width="1"/><path d="M3 6.8l2.6 3.6L10.5 2.8" stroke="#111" stroke-width="1.9" fill="none" stroke-linecap="square"/></svg>
<svg style="left:27px;top:752px" width="14" height="14" viewBox="0 0 14 14"><rect x="0.5" y="0.5" width="13" height="13" rx="1" fill="#fff" stroke="#8c8c8c" stroke-width="1"/><path d="M3 6.8l2.6 3.6L10.5 2.8" stroke="#111" stroke-width="1.9" fill="none" stroke-linecap="square"/></svg>
<svg style="left:11px;top:692px" width="6" height="8" viewBox="0 0 6 8"><path d="M0.5 0.5l5 3.5-5 3.5z" fill="#555"/></svg>
<svg style="left:11px;top:713px" width="6" height="8" viewBox="0 0 6 8"><path d="M0.5 0.5l5 3.5-5 3.5z" fill="#555"/></svg>
<svg style="left:9px;top:757px" width="9" height="6" viewBox="0 0 9 6"><path d="M0.5 0.5h8l-4 5z" fill="#555"/></svg>
<svg style="left:47px;top:667px" width="16" height="16" viewBox="0 0 16 16"><path d="M8 1l7 7-7 7-7-7z" fill="#d81e28" stroke="#b01018" stroke-width="0.6"/></svg>
<svg style="left:48px;top:689px" width="15" height="15" viewBox="0 0 15 15"><circle cx="2.5" cy="12" r="1.4" fill="none" stroke="#8a8a8a" stroke-width="0.8"/><circle cx="5.5" cy="7" r="1.4" fill="none" stroke="#8a8a8a" stroke-width="0.8"/><circle cx="10.5" cy="3" r="1.4" fill="none" stroke="#8a8a8a" stroke-width="0.8"/></svg>
<svg style="left:48px;top:710px" width="15" height="15" viewBox="0 0 15 15"><circle cx="2.5" cy="12" r="1.4" fill="none" stroke="#8a8a8a" stroke-width="0.8"/><circle cx="5.5" cy="7" r="1.4" fill="none" stroke="#8a8a8a" stroke-width="0.8"/><circle cx="10.5" cy="3" r="1.4" fill="none" stroke="#8a8a8a" stroke-width="0.8"/></svg>
<svg style="left:28px;top:731px" width="13" height="14" viewBox="0 0 13 14"><rect x="0.5" y="0.5" width="11" height="12" rx="1.5" fill="#f2f2f2" stroke="#9a9a9a"/><path d="M2 3.5h8M2 6h3M6 6h4M2 8.5h3M6 8.5h4M2 11h3M6 11h4" stroke="#9a9a9a" stroke-width="0.9"/></svg>
<svg style="left:49px;top:752px" width="14" height="14" viewBox="0 0 14 14"><rect x="0" y="0" width="5" height="5" fill="#27374d"/><rect x="9" y="0" width="5" height="5" fill="#27374d"/><rect x="5" y="4" width="5" height="5" fill="#3a4e6a"/><rect x="0" y="9" width="5" height="5" fill="#27374d"/><rect x="5" y="9" width="5" height="5" fill="#a8c4e4"/><rect x="9" y="9" width="5" height="5" fill="#c8dcf0"/><rect x="0" y="4" width="5" height="5" fill="#c8dcf0"/></svg>
<div style="position:absolute;left:282.5px;top:668px;width:17px;height:15px;box-sizing:border-box;background:#e8e8e8;border-radius:3px;"></div>
<svg style="left:285.5px;top:670px" width="12" height="11" viewBox="0 0 12 11"><rect x="0.5" y="2.5" width="10" height="6" rx="1" fill="none" stroke="#9a9a9a"/><path d="M3 0.5v2M5.5 0.5v2M8 0.5v2M3 8.5v2M5.5 8.5v2M8 8.5v2" stroke="#9a9a9a" stroke-width="0.8"/></svg>
<svg style="left:314px;top:163px" width="798" height="851" viewBox="314 163 798 851"><rect x="314" y="163" width="798" height="851" fill="#aad3df"/>
<polygon points="832.0,206.0 913.0,206.0 900.0,217.0 886.0,230.0 854.0,237.0 832.0,248.0" fill="#dedad6"/>
<path d="M832 226L860 218L885 214L905 206M846 206L850 236M870 206L874 234M832 240L870 224L895 218M890 206L880 232M860 212L900 214" stroke="#fff" stroke-width="2.6" fill="none"/>
<path d="M832 232 Q845 222 858 218" stroke="#fff" stroke-width="3" fill="none"/>
<rect x="842" y="214" width="9" height="6" fill="#c9e6b0"/><rect x="860" y="220" width="10" height="6" fill="#c9e6b0"/><rect x="877" y="232" width="8" height="5" fill="#c9e6b0"/><rect x="868" y="210" width="7" height="5" fill="#f3f0b8"/>
<polygon points="832.0,248.0 854.0,237.0 886.0,230.0 893.0,234.0 901.0,246.0 909.0,256.0 920.0,275.0 921.0,279.0 907.0,283.0 905.0,293.0 899.0,291.0 891.0,284.0 876.0,274.0 868.0,279.0 865.0,285.0 859.0,293.0 845.0,298.0 832.0,301.0" fill="#f2dad3" stroke="#c9a3b8" stroke-width="1"/>
<rect x="842" y="262" width="10" height="4" fill="#d8bdb5" transform="rotate(28 842 262)"/>
<rect x="850" y="268" width="12" height="4" fill="#d8bdb5" transform="rotate(28 850 268)"/>
<rect x="860" y="272" width="8" height="5" fill="#d8bdb5" transform="rotate(28 860 272)"/>
<rect x="870" y="262" width="10" height="4" fill="#d8bdb5" transform="rotate(28 870 262)"/>
<rect x="880" y="268" width="9" height="5" fill="#d8bdb5" transform="rotate(28 880 268)"/>
<rect x="887" y="258" width="8" height="6" fill="#d8bdb5" transform="rotate(28 887 258)"/>
<rect x="875" y="252" width="9" height="4" fill="#d8bdb5" transform="rotate(28 875 252)"/>
<rect x="895" y="266" width="7" height="6" fill="#d8bdb5" transform="rotate(28 895 266)"/>
<rect x="900" y="276" width="6" height="5" fill="#d8bdb5" transform="rotate(28 900 276)"/>
<rect x="858" y="256" width="10" height="4" fill="#d8bdb5" transform="rotate(28 858 256)"/>
<rect x="866" y="244" width="10" height="4" fill="#d8bdb5" transform="rotate(28 866 244)"/>
<rect x="848" y="252" width="8" height="4" fill="#d8bdb5" transform="rotate(28 848 252)"/>
<rect x="885" y="280" width="8" height="4" fill="#d8bdb5" transform="rotate(28 885 280)"/>
<rect x="838" y="270" width="9" height="4" fill="#d8bdb5" transform="rotate(28 838 270)"/>
<rect x="846" y="278" width="8" height="4" fill="#d8bdb5" transform="rotate(28 846 278)"/>
<rect x="853" y="284" width="9" height="4" fill="#d8bdb5" transform="rotate(28 853 284)"/>
<rect x="892" y="250" width="7" height="4" fill="#d8bdb5" transform="rotate(28 892 250)"/>
<rect x="880" y="244" width="8" height="3" fill="#d8bdb5" transform="rotate(28 880 244)"/>
<rect x="906" y="272" width="5" height="4" fill="#d8bdb5" transform="rotate(28 906 272)"/>
<rect x="900" y="258" width="6" height="5" fill="#d8bdb5" transform="rotate(28 900 258)"/>
<path d="M836 262L864 286" stroke="#c9a3b8" stroke-width="5.5" fill="none"/><path d="M836 262L864 286" stroke="#aad3df" stroke-width="3.5" fill="none"/>
<path d="M862 290L875 276L884 284" stroke="#c9a3b8" stroke-width="1" fill="none"/>
<polygon points="914.0,206.0 1062.0,206.0 1064.0,210.0 1028.0,216.0 1026.0,235.0 1014.0,239.0 1004.0,218.0 995.0,236.0 986.0,227.0 978.0,235.0 1000.0,259.0 1008.0,269.0 992.0,273.0 969.0,284.0 952.0,281.0 943.0,265.0 931.0,253.0 921.0,246.0 919.0,237.0 923.0,220.0" fill="#f0dcd8" stroke="#c6a2b6" stroke-width="1"/>
<polygon points="943.0,262.0 966.0,244.0 990.0,272.0 969.0,283.0 952.0,278.0" fill="#b9d8e4" stroke="#9fc0e0" stroke-width="1.5"/>
<path d="M952 266L972 252M956 272L978 258M962 278L984 264" stroke="#d7e8ef" stroke-width="0.8"/>
<path d="M936 206L951 226L1006 206" stroke="#d6e6bd" stroke-width="9" fill="none"/>
<path d="M936 206L951 228L1007 206" stroke="#f4f7b6" stroke-width="4.5" fill="none"/>
<path d="M951 228L1001 269M1000 218L1062 208M962 214L985 212M1004 240L1018 236" stroke="#fff" stroke-width="2.4" fill="none"/>
<rect x="985" y="232" width="6" height="22" fill="#e3d1cb" transform="rotate(-38 985 232)"/>
<polygon points="1062.0,206.0 1111.0,206.0 1111.0,214.0 1108.0,212.0 1096.0,217.0 1094.0,227.0 1086.0,246.0 1079.0,256.0 1070.0,230.0 1064.0,210.0" fill="#ecdfe8" stroke="#b89ab0" stroke-width="1"/>
<rect x="1072" y="212" width="5" height="12" fill="#d9cac2"/><rect x="1080" y="213" width="5" height="12" fill="#d9cac2"/>
<path d="M1108 212L1111 250" stroke="#c9b0c6" stroke-width="2" fill="none"/>
<text x="843.5" y="247.0" font-size="8.6" fill="#a83a3a" font-family="Liberation Sans" font-style="italic">Base navale</text>
<text x="970.0" y="238.0" font-size="8" fill="#8a6fa8" font-family="Liberation Sans" transform="rotate(-26 970 238)">Bretagne</text>
<text x="1020.0" y="214.0" font-size="8" fill="#8a6fa8" font-family="Liberation Sans" transform="rotate(-18 1020 214)">Finistère</text>
<defs><clipPath id="hc"><polygon points="1001.0,290.0 1086.0,269.0 1080.0,300.0 1060.0,335.0 1030.0,360.0 999.0,375.0 988.0,377.0"/></clipPath></defs>
<polygon points="1001.0,290.0 1086.0,269.0 1080.0,300.0 1060.0,335.0 1030.0,360.0 999.0,375.0 988.0,377.0" fill="#b8ccd2"/>
<g clip-path="url(#hc)"><path d="M980 272 H1090" stroke="#4a9ff0" stroke-width="1.1" stroke-dasharray="5 4" stroke-dashoffset="0"/><path d="M980 277 H1090" stroke="#4a9ff0" stroke-width="1.1" stroke-dasharray="5 4" stroke-dashoffset="4"/><path d="M980 282 H1090" stroke="#4a9ff0" stroke-width="1.1" stroke-dasharray="5 4" stroke-dashoffset="0"/><path d="M980 287 H1090" stroke="#4a9ff0" stroke-width="1.1" stroke-dasharray="5 4" stroke-dashoffset="4"/><path d="M980 292 H1090" stroke="#4a9ff0" stroke-width="1.1" stroke-dasharray="5 4" stroke-dashoffset="0"/><path d="M980 297 H1090" stroke="#4a9ff0" stroke-width="1.1" stroke-dasharray="5 4" stroke-dashoffset="4"/><path d="M980 302 H1090" stroke="#4a9ff0" stroke-width="1.1" stroke-dasharray="5 4" stroke-dashoffset="0"/><path d="M980 307 H1090" stroke="#4a9ff0" stroke-width="1.1" stroke-dasharray="5 4" stroke-dashoffset="4"/><path d="M980 312 H1090" stroke="#4a9ff0" stroke-width="1.1" stroke-dasharray="5 4" stroke-dashoffset="0"/><path d="M980 317 H1090" stroke="#4a9ff0" stroke-width="1.1" stroke-dasharray="5 4" stroke-dashoffset="4"/><path d="M980 322 H1090" stroke="#4a9ff0" stroke-width="1.1" stroke-dasharray="5 4" stroke-dashoffset="0"/><path d="M980 327 H1090" stroke="#4a9ff0" stroke-width="1.1" stroke-dasharray="5 4" stroke-dashoffset="4"/><path d="M980 332 H1090" stroke="#4a9ff0" stroke-width="1.1" stroke-dasharray="5 4" stroke-dashoffset="0"/><path d="M980 337 H1090" stroke="#4a9ff0" stroke-width="1.1" stroke-dasharray="5 4" stroke-dashoffset="4"/><path d="M980 342 H1090" stroke="#4a9ff0" stroke-width="1.1" stroke-dasharray="5 4" stroke-dashoffset="0"/><path d="M980 347 H1090" stroke="#4a9ff0" stroke-width="1.1" stroke-dasharray="5 4" stroke-dashoffset="4"/><path d="M980 352 H1090" stroke="#4a9ff0" stroke-width="1.1" stroke-dasharray="5 4" stroke-dashoffset="0"/><path d="M980 357 H1090" stroke="#4a9ff0" stroke-width="1.1" stroke-dasharray="5 4" stroke-dashoffset="4"/><path d="M980 362 H1090" stroke="#4a9ff0" stroke-width="1.1" stroke-dasharray="5 4" stroke-dashoffset="0"/><path d="M980 367 H1090" stroke="#4a9ff0" stroke-width="1.1" stroke-dasharray="5 4" stroke-dashoffset="4"/><path d="M980 372 H1090" stroke="#4a9ff0" stroke-width="1.1" stroke-dasharray="5 4" stroke-dashoffset="0"/><path d="M980 377 H1090" stroke="#4a9ff0" stroke-width="1.1" stroke-dasharray="5 4" stroke-dashoffset="4"/></g>
<path d="M988 377L1001 290L1086 269" stroke="#b9a6ac" stroke-width="1.2" fill="none"/>
<path d="M832 426L999 374" stroke="#c39aab" stroke-width="2.6"/><path d="M832 426L999 374" stroke="#d9b9c6" stroke-width="1"/>
<text x="836.0" y="422.0" font-size="7" fill="#8a6fa8" font-family="Liberation Sans" transform="rotate(-17 836 422)">Bretagne</text>
<defs><clipPath id="pc"><polygon points="314.0,841.0 317.4,840.3 320.9,839.6 324.3,838.9 327.7,838.1 331.1,837.4 334.6,836.7 337.9,835.6 341.7,834.4 345.7,834.9 349.3,832.7 353.4,833.2 357.1,832.0 360.8,830.5 364.7,831.0 368.2,829.1 372.1,829.5 375.7,827.9 379.4,827.3 383.3,827.5 387.8,827.1 386.5,822.9 387.3,818.9 388.8,815.0 390.0,811.7 391.5,807.8 393.4,804.2 396.8,801.9 398.2,797.4 402.6,796.2 404.6,792.3 407.7,789.1 411.2,787.7 415.0,786.7 419.1,786.6 422.1,783.6 426.2,783.1 428.1,779.7 429.2,775.9 431.4,772.6 432.1,768.3 434.2,765.3 436.6,762.6 439.8,760.3 441.3,757.0 441.8,751.9 443.0,747.2 447.0,746.3 450.9,745.2 455.1,745.9 459.1,745.0 462.6,743.1 466.4,743.3 470.1,742.5 474.0,742.7 477.6,741.6 480.9,739.9 484.7,741.1 487.8,738.3 491.4,738.5 495.5,739.6 499.8,738.3 503.9,739.5 508.2,738.5 512.5,740.4 516.3,739.0 519.9,737.0 523.9,736.1 527.1,733.2 531.4,732.4 534.7,728.7 538.1,725.2 542.0,723.4 546.3,722.8 550.4,721.6 554.0,718.9 557.6,718.7 560.8,716.4 564.6,717.3 568.1,716.4 571.8,716.5 575.2,715.3 578.4,713.2 581.9,712.7 585.9,712.7 589.4,710.3 593.5,710.7 597.2,709.2 601.0,708.4 604.8,707.5 608.9,708.6 612.3,706.2 616.1,705.8 619.9,705.4 622.8,705.2 625.9,709.1 626.0,713.6 626.9,718.0 626.4,721.9 627.0,725.6 627.3,729.4 629.1,733.3 627.1,736.5 625.5,740.0 622.5,742.7 620.7,746.1 620.7,750.5 618.3,753.7 615.8,756.8 613.4,759.9 610.5,762.7 607.9,765.7 606.3,769.3 605.1,773.0 602.5,775.9 600.9,779.4 598.7,782.5 596.1,785.5 595.0,789.2 593.7,792.8 591.7,796.1 589.9,799.4 589.6,803.6 585.8,805.4 584.1,808.6 582.0,811.5 580.2,814.6 579.2,818.2 577.2,821.1 576.5,825.0 573.8,828.1 573.8,832.3 572.4,835.9 570.6,839.4 569.3,843.1 567.5,846.5 566.7,850.6 564.7,853.8 562.3,856.7 560.3,859.9 557.7,862.6 556.3,866.2 552.4,868.1 550.9,871.6 549.8,875.4 547.5,878.4 544.6,881.3 541.9,884.4 539.7,887.8 535.6,889.7 532.7,892.5 531.1,896.5 527.9,899.5 525.5,903.4 522.6,905.9 521.2,909.6 520.7,913.6 518.5,917.6 521.3,920.4 522.8,923.7 521.7,928.0 523.9,931.0 526.6,933.9 527.5,937.7 530.5,940.3 531.1,944.2 531.8,947.7 532.6,951.3 533.5,955.0 535.1,958.5 535.3,962.3 536.4,966.2 534.2,969.4 534.2,973.0 532.9,976.4 533.3,980.3 530.7,983.3 526.8,985.0 523.7,987.5 521.2,990.6 519.0,994.0 518.1,997.8 517.2,1001.6 516.4,1005.4 515.5,1009.2 514.6,1013.0 314.0,1013.0"/></clipPath></defs>
<polygon points="314.0,841.0 317.4,840.3 320.9,839.6 324.3,838.9 327.7,838.1 331.1,837.4 334.6,836.7 337.9,835.6 341.7,834.4 345.7,834.9 349.3,832.7 353.4,833.2 357.1,832.0 360.8,830.5 364.7,831.0 368.2,829.1 372.1,829.5 375.7,827.9 379.4,827.3 383.3,827.5 387.8,827.1 386.5,822.9 387.3,818.9 388.8,815.0 390.0,811.7 391.5,807.8 393.4,804.2 396.8,801.9 398.2,797.4 402.6,796.2 404.6,792.3 407.7,789.1 411.2,787.7 415.0,786.7 419.1,786.6 422.1,783.6 426.2,783.1 428.1,779.7 429.2,775.9 431.4,772.6 432.1,768.3 434.2,765.3 436.6,762.6 439.8,760.3 441.3,757.0 441.8,751.9 443.0,747.2 447.0,746.3 450.9,745.2 455.1,745.9 459.1,745.0 462.6,743.1 466.4,743.3 470.1,742.5 474.0,742.7 477.6,741.6 480.9,739.9 484.7,741.1 487.8,738.3 491.4,738.5 495.5,739.6 499.8,738.3 503.9,739.5 508.2,738.5 512.5,740.4 516.3,739.0 519.9,737.0 523.9,736.1 527.1,733.2 531.4,732.4 534.7,728.7 538.1,725.2 542.0,723.4 546.3,722.8 550.4,721.6 554.0,718.9 557.6,718.7 560.8,716.4 564.6,717.3 568.1,716.4 571.8,716.5 575.2,715.3 578.4,713.2 581.9,712.7 585.9,712.7 589.4,710.3 593.5,710.7 597.2,709.2 601.0,708.4 604.8,707.5 608.9,708.6 612.3,706.2 616.1,705.8 619.9,705.4 622.8,705.2 625.9,709.1 626.0,713.6 626.9,718.0 626.4,721.9 627.0,725.6 627.3,729.4 629.1,733.3 627.1,736.5 625.5,740.0 622.5,742.7 620.7,746.1 620.7,750.5 618.3,753.7 615.8,756.8 613.4,759.9 610.5,762.7 607.9,765.7 606.3,769.3 605.1,773.0 602.5,775.9 600.9,779.4 598.7,782.5 596.1,785.5 595.0,789.2 593.7,792.8 591.7,796.1 589.9,799.4 589.6,803.6 585.8,805.4 584.1,808.6 582.0,811.5 580.2,814.6 579.2,818.2 577.2,821.1 576.5,825.0 573.8,828.1 573.8,832.3 572.4,835.9 570.6,839.4 569.3,843.1 567.5,846.5 566.7,850.6 564.7,853.8 562.3,856.7 560.3,859.9 557.7,862.6 556.3,866.2 552.4,868.1 550.9,871.6 549.8,875.4 547.5,878.4 544.6,881.3 541.9,884.4 539.7,887.8 535.6,889.7 532.7,892.5 531.1,896.5 527.9,899.5 525.5,903.4 522.6,905.9 521.2,909.6 520.7,913.6 518.5,917.6 521.3,920.4 522.8,923.7 521.7,928.0 523.9,931.0 526.6,933.9 527.5,937.7 530.5,940.3 531.1,944.2 531.8,947.7 532.6,951.3 533.5,955.0 535.1,958.5 535.3,962.3 536.4,966.2 534.2,969.4 534.2,973.0 532.9,976.4 533.3,980.3 530.7,983.3 526.8,985.0 523.7,987.5 521.2,990.6 519.0,994.0 518.1,997.8 517.2,1001.6 516.4,1005.4 515.5,1009.2 514.6,1013.0 314.0,1013.0" fill="#d3d9a2"/>
<g clip-path="url(#pc)"><polygon points="332,851 384,840 398,820 417,823 417,866 384,870 375,908 332,908" fill="#cdebb0"/><polygon points="417,857 457,857 462,899 417,899" fill="#cfe9b2"/><polygon points="458,773 519,776 520,801 458,801" fill="#cdebb0"/><polygon points="314,930 345,935 340,1013 314,1013" fill="#cdebb0"/><polygon points="450,801 530,801 520,847 460,847 440,830" fill="#c8d6a6"/><polygon points="350,925 400,905 440,915 450,970 420,1000 360,1000" fill="#c9d9ab"/><polygon points="397,908 443,908 445,963 400,963" fill="#dcd8a2"/><polygon points="345,1013 340,960 345,920 370,880 395,860 420,845 428,860 410,890 385,920 370,960 375,1013" fill="#b3d29e"/><polygon points="534,760 560,750 590,745 575,800 534,800" fill="#c6d6a6"/><polygon points="534.0,800.0 560.0,798.0 575.0,806.0 572.0,830.0 562.0,848.0 548.0,870.0 535.0,890.0 522.0,905.0 518.0,918.0 524.0,935.0 530.0,960.0 530.0,985.0 520.0,1013.0 438.0,1013.0 445.0,980.0 452.0,950.0 458.0,925.0 470.0,900.0 490.0,880.0 510.0,860.0 525.0,830.0" fill="#dcdad7"/><polygon points="480,930 500,925 505,960 485,975" fill="#c8dfae"/><polygon points="450,975 470,970 475,1000 455,1005" fill="#c8dfae"/><polygon points="525,815 540,815 535,840 520,838" fill="#c8dfae"/><polygon points="505,950 520,945 525,985 508,985" fill="#cbd8a8"/><polyline points="314.0,841.0 317.4,840.3 320.9,839.6 324.3,838.9 327.7,838.1 331.1,837.4 334.6,836.7 337.9,835.6 341.7,834.4 345.7,834.9 349.3,832.7 353.4,833.2 357.1,832.0 360.8,830.5 364.7,831.0 368.2,829.1 372.1,829.5 375.7,827.9 379.4,827.3 383.3,827.5 387.8,827.1 386.5,822.9 387.3,818.9 388.8,815.0 390.0,811.7 391.5,807.8 393.4,804.2 396.8,801.9 398.2,797.4 402.6,796.2 404.6,792.3 407.7,789.1 411.2,787.7 415.0,786.7 419.1,786.6 422.1,783.6 426.2,783.1 428.1,779.7 429.2,775.9 431.4,772.6 432.1,768.3 434.2,765.3 436.6,762.6 439.8,760.3 441.3,757.0 441.8,751.9 443.0,747.2 447.0,746.3 450.9,745.2 455.1,745.9 459.1,745.0 462.6,743.1 466.4,743.3 470.1,742.5 474.0,742.7 477.6,741.6 480.9,739.9 484.7,741.1 487.8,738.3 491.4,738.5 495.5,739.6 499.8,738.3 503.9,739.5 508.2,738.5 512.5,740.4 516.3,739.0 519.9,737.0 523.9,736.1 527.1,733.2 531.4,732.4 534.7,728.7 538.1,725.2 542.0,723.4 546.3,722.8 550.4,721.6 554.0,718.9 557.6,718.7 560.8,716.4 564.6,717.3 568.1,716.4 571.8,716.5 575.2,715.3 578.4,713.2 581.9,712.7 585.9,712.7 589.4,710.3 593.5,710.7 597.2,709.2 601.0,708.4 604.8,707.5 608.9,708.6 612.3,706.2 616.1,705.8 619.9,705.4 622.8,705.2 625.9,709.1 626.0,713.6 626.9,718.0 626.4,721.9 627.0,725.6 627.3,729.4 629.1,733.3 627.1,736.5 625.5,740.0 622.5,742.7 620.7,746.1 620.7,750.5 618.3,753.7 615.8,756.8 613.4,759.9 610.5,762.7 607.9,765.7 606.3,769.3 605.1,773.0 602.5,775.9 600.9,779.4 598.7,782.5 596.1,785.5 595.0,789.2 593.7,792.8 591.7,796.1 589.9,799.4 589.6,803.6 585.8,805.4 584.1,808.6 582.0,811.5 580.2,814.6 579.2,818.2 577.2,821.1 576.5,825.0 573.8,828.1 573.8,832.3 572.4,835.9 570.6,839.4 569.3,843.1 567.5,846.5 566.7,850.6 564.7,853.8 562.3,856.7 560.3,859.9 557.7,862.6 556.3,866.2 552.4,868.1 550.9,871.6 549.8,875.4 547.5,878.4 544.6,881.3 541.9,884.4 539.7,887.8 535.6,889.7 532.7,892.5 531.1,896.5 527.9,899.5 525.5,903.4 522.6,905.9 521.2,909.6 520.7,913.6 518.5,917.6 521.3,920.4 522.8,923.7 521.7,928.0 523.9,931.0 526.6,933.9 527.5,937.7 530.5,940.3 531.1,944.2 531.8,947.7 532.6,951.3 533.5,955.0 535.1,958.5 535.3,962.3 536.4,966.2 534.2,969.4 534.2,973.0 532.9,976.4 533.3,980.3 530.7,983.3 526.8,985.0 523.7,987.5 521.2,990.6 519.0,994.0 518.1,997.8 517.2,1001.6 516.4,1005.4 515.5,1009.2 514.6,1013.0" fill="none" stroke="#c3cb96" stroke-width="6"/><path d="M317 910L332 893L336 868L351 855L378 846L398 820L404 814L429 796L451 772L462 763L473 765L484 778L513 779L531 774L549 752L571 738L600 725L604 729L603 743L589 783L573 811L569 824L556 840L542 857L524 886L513 901L511 922L527 948L531 977L520 1002" stroke="#fff" stroke-width="3.2" fill="none" stroke-linejoin="round"/><path d="M378 846L385 857L399 862L413 883L421 905L443 927L474 938L500 945M385 857L369 884L342 914L340 934M314 928L410 963L474 982L527 998M542 759L527 803L505 857L487 901L469 937L455 1013M410 963L408 980L375 985L373 1013M314 995L373 998M474 982L470 1013M314 920L340 925M455 865L515 873M500 820L534 800" stroke="#fff" stroke-width="2" fill="none"/><path d="M400 880L380 900L362 930L345 960L340 1000L350 1013" stroke="#9fc8d8" stroke-width="1.5" fill="none"/><path d="M330 850L380 838L420 800L450 770L500 750L560 730L615 715M600 740L590 770L570 810" stroke="#e89a8a" stroke-width="0.8" stroke-dasharray="1.5 2" fill="none"/></g>
<polyline points="314.0,841.0 317.4,840.3 320.9,839.6 324.3,838.9 327.7,838.1 331.1,837.4 334.6,836.7 337.9,835.6 341.7,834.4 345.7,834.9 349.3,832.7 353.4,833.2 357.1,832.0 360.8,830.5 364.7,831.0 368.2,829.1 372.1,829.5 375.7,827.9 379.4,827.3 383.3,827.5 387.8,827.1 386.5,822.9 387.3,818.9 388.8,815.0 390.0,811.7 391.5,807.8 393.4,804.2 396.8,801.9 398.2,797.4 402.6,796.2 404.6,792.3 407.7,789.1 411.2,787.7 415.0,786.7 419.1,786.6 422.1,783.6 426.2,783.1 428.1,779.7 429.2,775.9 431.4,772.6 432.1,768.3 434.2,765.3 436.6,762.6 439.8,760.3 441.3,757.0 441.8,751.9 443.0,747.2 447.0,746.3 450.9,745.2 455.1,745.9 459.1,745.0 462.6,743.1 466.4,743.3 470.1,742.5 474.0,742.7 477.6,741.6 480.9,739.9 484.7,741.1 487.8,738.3 491.4,738.5 495.5,739.6 499.8,738.3 503.9,739.5 508.2,738.5 512.5,740.4 516.3,739.0 519.9,737.0 523.9,736.1 527.1,733.2 531.4,732.4 534.7,728.7 538.1,725.2 542.0,723.4 546.3,722.8 550.4,721.6 554.0,718.9 557.6,718.7 560.8,716.4 564.6,717.3 568.1,716.4 571.8,716.5 575.2,715.3 578.4,713.2 581.9,712.7 585.9,712.7 589.4,710.3 593.5,710.7 597.2,709.2 601.0,708.4 604.8,707.5 608.9,708.6 612.3,706.2 616.1,705.8 619.9,705.4 622.8,705.2 625.9,709.1 626.0,713.6 626.9,718.0 626.4,721.9 627.0,725.6 627.3,729.4 629.1,733.3 627.1,736.5 625.5,740.0 622.5,742.7 620.7,746.1 620.7,750.5 618.3,753.7 615.8,756.8 613.4,759.9 610.5,762.7 607.9,765.7 606.3,769.3 605.1,773.0 602.5,775.9 600.9,779.4 598.7,782.5 596.1,785.5 595.0,789.2 593.7,792.8 591.7,796.1 589.9,799.4 589.6,803.6 585.8,805.4 584.1,808.6 582.0,811.5 580.2,814.6 579.2,818.2 577.2,821.1 576.5,825.0 573.8,828.1 573.8,832.3 572.4,835.9 570.6,839.4 569.3,843.1 567.5,846.5 566.7,850.6 564.7,853.8 562.3,856.7 560.3,859.9 557.7,862.6 556.3,866.2 552.4,868.1 550.9,871.6 549.8,875.4 547.5,878.4 544.6,881.3 541.9,884.4 539.7,887.8 535.6,889.7 532.7,892.5 531.1,896.5 527.9,899.5 525.5,903.4 522.6,905.9 521.2,909.6 520.7,913.6 518.5,917.6 521.3,920.4 522.8,923.7 521.7,928.0 523.9,931.0 526.6,933.9 527.5,937.7 530.5,940.3 531.1,944.2 531.8,947.7 532.6,951.3 533.5,955.0 535.1,958.5 535.3,962.3 536.4,966.2 534.2,969.4 534.2,973.0 532.9,976.4 533.3,980.3 530.7,983.3 526.8,985.0 523.7,987.5 521.2,990.6 519.0,994.0 518.1,997.8 517.2,1001.6 516.4,1005.4 515.5,1009.2 514.6,1013.0" fill="none" stroke="#6f7f70" stroke-width="2" stroke-linejoin="round"/>
<polygon points="314,853 319,855 320,868 314,870" fill="#aad3df" stroke="#6f7f70" stroke-width="1"/>
<text x="612.0" y="704.0" font-size="7.5" fill="#333" font-family="Liberation Sans" stroke="#fff" stroke-opacity="0.6" stroke-width="1.6" paint-order="stroke">Pointe</text>
<text x="607.0" y="713.0" font-size="7.5" fill="#333" font-family="Liberation Sans" stroke="#fff" stroke-opacity="0.6" stroke-width="1.6" paint-order="stroke">des Espagnols</text>
<text x="443.0" y="757.0" font-size="7.5" fill="#333" font-family="Liberation Sans" stroke="#fff" stroke-opacity="0.6" stroke-width="1.6" paint-order="stroke">Pointe</text>
<text x="441.0" y="766.0" font-size="7.5" fill="#333" font-family="Liberation Sans" stroke="#fff" stroke-opacity="0.6" stroke-width="1.6" paint-order="stroke">Robert</text>
<text x="453.0" y="775.0" font-size="7.5" fill="#333" font-family="Liberation Sans" stroke="#fff" stroke-opacity="0.6" stroke-width="1.6" paint-order="stroke">Kergadiou</text>
<text x="526.0" y="830.0" font-size="7.5" fill="#333" font-family="Liberation Sans" stroke="#fff" stroke-opacity="0.6" stroke-width="1.6" paint-order="stroke">Le Lez</text>
<text x="475.0" y="852.0" font-size="7.5" fill="#333" font-family="Liberation Sans" stroke="#fff" stroke-opacity="0.6" stroke-width="1.6" paint-order="stroke">Le Gouerest</text>
<text x="455.0" y="864.0" font-size="7.5" fill="#333" font-family="Liberation Sans" stroke="#fff" stroke-opacity="0.6" stroke-width="1.6" paint-order="stroke">Kermorvan</text>
<text x="480.0" y="897.0" font-size="7.5" fill="#333" font-family="Liberation Sans" stroke="#fff" stroke-opacity="0.6" stroke-width="1.6" paint-order="stroke">Trevarguen</text>
<text x="422.0" y="906.0" font-size="7.5" fill="#333" font-family="Liberation Sans" stroke="#fff" stroke-opacity="0.6" stroke-width="1.6" paint-order="stroke">Keralan</text>
<text x="316.0" y="916.0" font-size="7.5" fill="#333" font-family="Liberation Sans" stroke="#fff" stroke-opacity="0.6" stroke-width="1.6" paint-order="stroke">Kerviniou</text>
<text x="499.0" y="986.0" font-size="7.5" fill="#333" font-family="Liberation Sans" stroke="#fff" stroke-opacity="0.6" stroke-width="1.6" paint-order="stroke">Pontscorff</text>
<text x="388.0" y="998.0" font-size="7.5" fill="#333" font-family="Liberation Sans" stroke="#fff" stroke-opacity="0.6" stroke-width="1.6" paint-order="stroke">Le Disloup</text>
<text x="316.0" y="847.0" font-size="7.5" fill="#333" font-family="Liberation Sans" stroke="#fff" stroke-opacity="0.6" stroke-width="1.6" paint-order="stroke">Pointe</text>
<text x="316.0" y="855.0" font-size="7.5" fill="#333" font-family="Liberation Sans" stroke="#fff" stroke-opacity="0.6" stroke-width="1.6" paint-order="stroke">Cornouaille</text>
<text x="316.0" y="949.0" font-size="7.5" fill="#333" font-family="Liberation Sans" stroke="#fff" stroke-opacity="0.6" stroke-width="1.6" paint-order="stroke">avres</text>
<text x="316.0" y="988.0" font-size="7.5" fill="#333" font-family="Liberation Sans" stroke="#fff" stroke-opacity="0.6" stroke-width="1.6" paint-order="stroke">guinou</text>
<rect x="508" y="926" width="25" height="14" rx="2" fill="#f2f2f2" stroke="#ccc" stroke-width="0.8"/>
<text x="511.0" y="936.0" font-size="8" fill="#555" font-family="Liberation Sans" >D 355</text>
<text x="313.5" y="723.0" font-size="12.6" fill="#5b86b9" font-family="Liberation Sans" font-style="italic" letter-spacing="0.1">et de Brest</text>
<text x="578.0" y="790.0" font-size="7.5" fill="#8a6fa8" font-family="Liberation Sans" transform="rotate(-68 578 790)">Roscanvel</text>
<path d="M1001 242L1013 262L1012 269L1004 279L998 287L991 303L985 322L981 342L977 363L972 383L968 400L975 420L983 442L993 474L1006 524L1018 573L1031 630L1053 723L1071 797L1090 853L1109 923" stroke="#6f84ee" stroke-width="1.1" fill="none" stroke-dasharray="4 3"/>
<path d="M996 244L1008 263L1007 269L999 278L993 287L986 303L980 322L976 342L972 363L967 383L964 396L962 402L954 420L931 441L894 459L857 473L832 482L315 682" stroke="#6f84ee" stroke-width="1.1" fill="none" stroke-dasharray="4 3"/>
<text x="1087.0" y="822.0" font-size="7" fill="#6f84ee" font-family="Liberation Sans" transform="rotate(71 1087 822)">Brest - Le Fret</text>
<path d="M914.2 222.3h9.4l-4.7 -7.8z" fill="#eb0a4c"/>
<path d="M906.5 219.8h9.4l-4.7 -7.8z" fill="#eb0a4c"/>
<path d="M910.5 226.9h9.4l-4.7 -7.8z" fill="#eb0a4c"/>
<path d="M902.8 224.4h9.4l-4.7 -7.8z" fill="#eb0a4c"/>
<path d="M906.8 231.4h9.4l-4.7 -7.8z" fill="#eb0a4c"/>
<path d="M899.1 228.9h9.4l-4.7 -7.8z" fill="#eb0a4c"/>
<path d="M903.1 236.0h9.4l-4.7 -7.8z" fill="#eb0a4c"/>
<path d="M894.6 236.6h9.4l-4.7 -7.8z" fill="#eb0a4c"/>
<path d="M902.5 237.9h9.4l-4.7 -7.8z" fill="#eb0a4c"/>
<path d="M895.6 241.9h9.4l-4.7 -7.8z" fill="#eb0a4c"/>
<path d="M903.5 243.2h9.4l-4.7 -7.8z" fill="#eb0a4c"/>
<path d="M896.6 247.3h9.4l-4.7 -7.8z" fill="#eb0a4c"/>
<path d="M904.5 248.5h9.4l-4.7 -7.8z" fill="#eb0a4c"/>
<path d="M898.0 253.8h9.4l-4.7 -7.8z" fill="#eb0a4c"/>
<path d="M905.9 252.3h9.4l-4.7 -7.8z" fill="#eb0a4c"/>
<path d="M900.7 258.5h9.4l-4.7 -7.8z" fill="#eb0a4c"/>
<path d="M908.6 257.0h9.4l-4.7 -7.8z" fill="#eb0a4c"/>
<path d="M903.3 263.1h9.4l-4.7 -7.8z" fill="#eb0a4c"/>
<path d="M911.3 261.7h9.4l-4.7 -7.8z" fill="#eb0a4c"/>
<path d="M906.2 268.1h9.4l-4.7 -7.8z" fill="#eb0a4c"/>
<path d="M913.9 265.8h9.4l-4.7 -7.8z" fill="#eb0a4c"/>
<path d="M909.4 272.4h9.4l-4.7 -7.8z" fill="#eb0a4c"/>
<path d="M917.1 270.1h9.4l-4.7 -7.8z" fill="#eb0a4c"/>
<path d="M912.5 276.7h9.4l-4.7 -7.8z" fill="#eb0a4c"/>
<path d="M920.2 274.4h9.4l-4.7 -7.8z" fill="#eb0a4c"/>
<path d="M915.7 281.0h9.4l-4.7 -7.8z" fill="#eb0a4c"/>
<path d="M923.1 278.4h9.4l-4.7 -7.8z" fill="#eb0a4c"/>
<path d="M919.4 285.5h9.4l-4.7 -7.8z" fill="#eb0a4c"/>
<path d="M926.9 282.6h9.4l-4.7 -7.8z" fill="#eb0a4c"/>
<path d="M923.2 289.7h9.4l-4.7 -7.8z" fill="#eb0a4c"/>
<path d="M930.7 286.8h9.4l-4.7 -7.8z" fill="#eb0a4c"/>
<path d="M927.0 293.9h9.4l-4.7 -7.8z" fill="#eb0a4c"/>
<path d="M934.5 291.0h9.4l-4.7 -7.8z" fill="#eb0a4c"/>
<path d="M930.8 298.1h9.4l-4.7 -7.8z" fill="#eb0a4c"/>
<path d="M938.3 295.2h9.4l-4.7 -7.8z" fill="#eb0a4c"/>
<path d="M934.6 302.3h9.4l-4.7 -7.8z" fill="#eb0a4c"/>
<path d="M942.5 299.9h9.4l-4.7 -7.8z" fill="#eb0a4c"/>
<path d="M937.5 306.1h9.4l-4.7 -7.8z" fill="#eb0a4c"/>
<path d="M945.3 304.3h9.4l-4.7 -7.8z" fill="#eb0a4c"/>
<path d="M940.3 310.5h9.4l-4.7 -7.8z" fill="#eb0a4c"/>
<path d="M948.1 308.7h9.4l-4.7 -7.8z" fill="#eb0a4c"/>
<path d="M943.1 314.9h9.4l-4.7 -7.8z" fill="#eb0a4c"/>
<path d="M950.9 313.1h9.4l-4.7 -7.8z" fill="#eb0a4c"/>
<path d="M945.9 319.3h9.4l-4.7 -7.8z" fill="#eb0a4c"/>
<path d="M953.7 317.5h9.4l-4.7 -7.8z" fill="#eb0a4c"/>
<path d="M948.7 323.7h9.4l-4.7 -7.8z" fill="#eb0a4c"/>
<path d="M956.7 322.2h9.4l-4.7 -7.8z" fill="#eb0a4c"/>
<path d="M951.2 328.1h9.4l-4.7 -7.8z" fill="#eb0a4c"/>
<path d="M959.2 327.2h9.4l-4.7 -7.8z" fill="#eb0a4c"/>
<path d="M953.7 333.1h9.4l-4.7 -7.8z" fill="#eb0a4c"/>
<path d="M961.7 332.2h9.4l-4.7 -7.8z" fill="#eb0a4c"/>
<path d="M956.2 338.1h9.4l-4.7 -7.8z" fill="#eb0a4c"/>
<path d="M964.2 337.2h9.4l-4.7 -7.8z" fill="#eb0a4c"/>
<path d="M958.7 343.1h9.4l-4.7 -7.8z" fill="#eb0a4c"/>
<path d="M968.8 359.9h9.4l-4.7 -7.8z" fill="#eb0a4c"/>
<path d="M973.3 377.9h9.4l-4.7 -7.8z" fill="#eb0a4c"/>
<path d="M972.3 409.9h9.4l-4.7 -7.8z" fill="#eb0a4c"/>
<path d="M974.9 429.9h9.4l-4.7 -7.8z" fill="#eb0a4c"/>
<path d="M976.3 435.9h9.4l-4.7 -7.8z" fill="#eb0a4c"/>
<path d="M976.7 441.9h9.4l-4.7 -7.8z" fill="#eb0a4c"/>
<path d="M977.3 454.6h9.4l-4.7 -7.8z" fill="#eb0a4c"/>
<path d="M978.7 460.3h9.4l-4.7 -7.8z" fill="#eb0a4c"/>
<path d="M979.3 465.9h9.4l-4.7 -7.8z" fill="#eb0a4c"/>
<path d="M979.9 469.9h9.4l-4.7 -7.8z" fill="#eb0a4c"/>
<path d="M983.7 487.9h9.4l-4.7 -7.8z" fill="#eb0a4c"/>
<path d="M985.7 493.9h9.4l-4.7 -7.8z" fill="#eb0a4c"/>
<path d="M985.7 505.9h9.4l-4.7 -7.8z" fill="#eb0a4c"/>
<path d="M985.7 511.9h9.4l-4.7 -7.8z" fill="#eb0a4c"/>
<path d="M985.7 519.9h9.4l-4.7 -7.8z" fill="#eb0a4c"/>
<path d="M986.6 544.5h9.4l-4.7 -7.8z" fill="#eb0a4c"/>
<path d="M987.8 551.2h9.4l-4.7 -7.8z" fill="#eb0a4c"/>
<path d="M989.8 556.9h9.4l-4.7 -7.8z" fill="#eb0a4c"/>
<path d="M993.5 575.2h9.4l-4.7 -7.8z" fill="#eb0a4c"/>
<path d="M990.5 598.2h9.4l-4.7 -7.8z" fill="#eb0a4c"/>
<path d="M987.8 609.9h9.4l-4.7 -7.8z" fill="#eb0a4c"/>
<path d="M986.6 616.3h9.4l-4.7 -7.8z" fill="#eb0a4c"/>
<path d="M986.8 657.9h9.4l-4.7 -7.8z" fill="#eb0a4c"/>
<path d="M990.3 670.9h9.4l-4.7 -7.8z" fill="#eb0a4c"/>
<path d="M991.3 675.5h9.4l-4.7 -7.8z" fill="#eb0a4c"/>
<path d="M994.3 687.9h9.4l-4.7 -7.8z" fill="#eb0a4c"/>
<path d="M995.3 694.4h9.4l-4.7 -7.8z" fill="#eb0a4c"/>
<path d="M997.9 704.9h9.4l-4.7 -7.8z" fill="#eb0a4c"/>
<path d="M999.8 717.4h9.4l-4.7 -7.8z" fill="#eb0a4c"/>
<path d="M1001.7 722.9h9.4l-4.7 -7.8z" fill="#eb0a4c"/>
<path d="M1004.3 735.9h9.4l-4.7 -7.8z" fill="#eb0a4c"/>
<path d="M1005.3 741.9h9.4l-4.7 -7.8z" fill="#eb0a4c"/>
<path d="M1008.3 752.9h9.4l-4.7 -7.8z" fill="#eb0a4c"/>
<path d="M1010.3 764.6h9.4l-4.7 -7.8z" fill="#eb0a4c"/>
<path d="M1012.8 775.9h9.4l-4.7 -7.8z" fill="#eb0a4c"/>
<path d="M1013.3 782.4h9.4l-4.7 -7.8z" fill="#eb0a4c"/>
<path d="M1016.3 787.9h9.4l-4.7 -7.8z" fill="#eb0a4c"/>
<path d="M1020.3 799.9h9.4l-4.7 -7.8z" fill="#eb0a4c"/>
<path d="M1023.9 809.9h9.4l-4.7 -7.8z" fill="#eb0a4c"/>
<path d="M1030.3 821.4h9.4l-4.7 -7.8z" fill="#eb0a4c"/>
<path d="M1036.3 832.6h9.4l-4.7 -7.8z" fill="#eb0a4c"/>
<path d="M1041.3 842.6h9.4l-4.7 -7.8z" fill="#eb0a4c"/>
<path d="M1049.3 855.9h9.4l-4.7 -7.8z" fill="#eb0a4c"/>
<path d="M1054.8 865.9h9.4l-4.7 -7.8z" fill="#eb0a4c"/>
<path d="M1059.3 872.7h9.4l-4.7 -7.8z" fill="#eb0a4c"/>
<path d="M1066.3 887.5h9.4l-4.7 -7.8z" fill="#eb0a4c"/>
<path d="M1071.1 893.9h9.4l-4.7 -7.8z" fill="#eb0a4c"/>
<path d="M1078.3 902.9h9.4l-4.7 -7.8z" fill="#eb0a4c"/>
<path d="M1085.3 912.4h9.4l-4.7 -7.8z" fill="#eb0a4c"/>
<path d="M1093.3 920.9h9.4l-4.7 -7.8z" fill="#eb0a4c"/>
<path d="M1100.0 929.9h9.4l-4.7 -7.8z" fill="#eb0a4c"/>
<circle cx="917.5" cy="207.0" r="3.8" fill="#c0267a" stroke="#222" stroke-width="1.1"/>
<circle cx="916.5" cy="215.0" r="3.8" fill="#d8343a" stroke="#222" stroke-width="1.1"/>
<circle cx="909.4" cy="219.3" r="3.8" fill="#3aa0e0" stroke="#222" stroke-width="1.1"/>
<circle cx="906.3" cy="222.8" r="3.8" fill="#d77a45" stroke="#222" stroke-width="1.1"/>
<circle cx="905.0" cy="230.5" r="3.8" fill="#d8343a" stroke="#222" stroke-width="1.1"/>
<circle cx="912.5" cy="230.5" r="3.8" fill="#5fd27a" stroke="#222" stroke-width="1.1"/>
<circle cx="919.6" cy="230.5" r="3.8" fill="#6ed98a" stroke="#222" stroke-width="1.1"/>
<circle cx="909.4" cy="236.6" r="3.8" fill="#e8502a" stroke="#222" stroke-width="1.1"/>
<circle cx="894.7" cy="241.7" r="3.8" fill="#40c0d0" stroke="#222" stroke-width="1.1"/>
<circle cx="905.0" cy="241.7" r="3.8" fill="#d8343a" stroke="#222" stroke-width="1.1"/>
<circle cx="900.8" cy="249.9" r="3.8" fill="#7040c0" stroke="#222" stroke-width="1.1"/>
<circle cx="910.0" cy="249.9" r="3.8" fill="#d8343a" stroke="#222" stroke-width="1.1"/>
<circle cx="917.0" cy="258.0" r="3.8" fill="#d8343a" stroke="#222" stroke-width="1.1"/>
<circle cx="923.7" cy="268.6" r="3.8" fill="#d8343a" stroke="#222" stroke-width="1.1"/>
<circle cx="928.7" cy="281.0" r="3.8" fill="#d8343a" stroke="#222" stroke-width="1.1"/>
<circle cx="939.0" cy="304.8" r="3.8" fill="#d8343a" stroke="#222" stroke-width="1.1"/>
<circle cx="958.7" cy="232.6" r="3.8" fill="#d8203a" stroke="#222" stroke-width="1.1"/>
<circle cx="1006.0" cy="235.0" r="3.8" fill="#f09a50" stroke="#222" stroke-width="1.1"/>
<circle cx="1025.0" cy="238.0" r="3.8" fill="#e8c040" stroke="#222" stroke-width="1.1"/>
<circle cx="1054.0" cy="227.5" r="3.8" fill="#1f6a80" stroke="#222" stroke-width="1.1"/>
<circle cx="1056.0" cy="230.5" r="3.8" fill="#3ab0d8" stroke="#222" stroke-width="1.1"/>
<circle cx="1066.0" cy="220.0" r="3.8" fill="#20d8c0" stroke="#222" stroke-width="1.1"/>
<circle cx="994.0" cy="248.9" r="3.8" fill="#40c030" stroke="#222" stroke-width="1.1"/>
<circle cx="996.0" cy="251.5" r="3.8" fill="#a0d030" stroke="#222" stroke-width="1.1"/>
<circle cx="998.0" cy="254.0" r="3.8" fill="#e05a90" stroke="#222" stroke-width="1.1"/>
<circle cx="959.7" cy="260.5" r="3.8" fill="#c0e860" stroke="#222" stroke-width="1.1"/>
<circle cx="964.8" cy="259.7" r="3.8" fill="#e0e860" stroke="#222" stroke-width="1.1"/>
<circle cx="973.7" cy="262.5" r="3.8" fill="#c020d8" stroke="#222" stroke-width="1.1"/>
<circle cx="964.8" cy="267.8" r="3.8" fill="#e8d840" stroke="#222" stroke-width="1.1"/>
<circle cx="979.0" cy="269.8" r="3.8" fill="#80a0e0" stroke="#222" stroke-width="1.1"/>
<circle cx="969.7" cy="282.5" r="3.8" fill="#4040e0" stroke="#222" stroke-width="1.1"/>
<circle cx="835.0" cy="305.0" r="3.8" fill="#e8a040" stroke="#222" stroke-width="1.1"/>
<circle cx="854.8" cy="360.8" r="3.8" fill="#50c860" stroke="#222" stroke-width="1.1"/>
<circle cx="930.8" cy="360.8" r="3.8" fill="#5070e0" stroke="#222" stroke-width="1.1"/>
<circle cx="935.8" cy="427.7" r="3.8" fill="#30c0a0" stroke="#222" stroke-width="1.1"/>
<circle cx="974.0" cy="401.0" r="3.8" fill="#40c850" stroke="#222" stroke-width="1.1"/>
<circle cx="974.0" cy="416.0" r="3.8" fill="#40c850" stroke="#222" stroke-width="1.1"/>
<circle cx="927.7" cy="346.6" r="3.8" fill="#c050c8" stroke="#222" stroke-width="1.1"/>
<circle cx="930.2" cy="346.9" r="3.8" fill="#c050c8" stroke="#222" stroke-width="1.1"/>
<circle cx="932.6" cy="347.6" r="3.8" fill="#c050c8" stroke="#222" stroke-width="1.1"/>
<circle cx="935.1" cy="348.6" r="3.8" fill="#c050c8" stroke="#222" stroke-width="1.1"/>
<circle cx="937.5" cy="349.9" r="3.8" fill="#c050c8" stroke="#222" stroke-width="1.1"/>
<circle cx="940.0" cy="351.5" r="3.8" fill="#c050c8" stroke="#222" stroke-width="1.1"/>
<circle cx="942.5" cy="353.5" r="3.8" fill="#c050c8" stroke="#222" stroke-width="1.1"/>
<circle cx="944.9" cy="355.8" r="3.8" fill="#c050c8" stroke="#222" stroke-width="1.1"/>
<circle cx="947.4" cy="358.4" r="3.8" fill="#c050c8" stroke="#222" stroke-width="1.1"/>
<circle cx="949.9" cy="361.4" r="3.8" fill="#c050c8" stroke="#222" stroke-width="1.1"/>
<circle cx="952.3" cy="364.7" r="3.8" fill="#c050c8" stroke="#222" stroke-width="1.1"/>
<circle cx="954.8" cy="368.3" r="3.8" fill="#c050c8" stroke="#222" stroke-width="1.1"/>
<circle cx="957.2" cy="372.3" r="3.8" fill="#c050c8" stroke="#222" stroke-width="1.1"/>
<circle cx="959.7" cy="376.6" r="3.8" fill="#c050c8" stroke="#222" stroke-width="1.1"/>
<circle cx="909.8" cy="339.5" r="3.8" fill="#c050c8" stroke="#222" stroke-width="1.1"/>
<circle cx="961.3" cy="387.3" r="3.8" fill="#c050c8" stroke="#222" stroke-width="1.1"/>
<circle cx="956.0" cy="369.0" r="3.8" fill="#c050c8" stroke="#222" stroke-width="1.1"/>
<circle cx="959.3" cy="374.0" r="3.8" fill="#c050c8" stroke="#222" stroke-width="1.1"/>
<circle cx="905.7" cy="342.5" r="3.8" fill="#48c848" stroke="#222" stroke-width="1.1"/>
<circle cx="918.6" cy="341.5" r="3.8" fill="#48c848" stroke="#222" stroke-width="1.1"/>
<circle cx="923.0" cy="341.0" r="3.8" fill="#48c848" stroke="#222" stroke-width="1.1"/>
<circle cx="927.7" cy="340.5" r="3.8" fill="#48c848" stroke="#222" stroke-width="1.1"/>
<circle cx="932.0" cy="340.5" r="3.8" fill="#48c848" stroke="#222" stroke-width="1.1"/>
<circle cx="936.0" cy="341.0" r="3.8" fill="#48c848" stroke="#222" stroke-width="1.1"/>
<circle cx="940.0" cy="342.0" r="3.8" fill="#48c848" stroke="#222" stroke-width="1.1"/>
<circle cx="944.0" cy="343.5" r="3.8" fill="#48c848" stroke="#222" stroke-width="1.1"/>
<circle cx="948.0" cy="345.0" r="3.8" fill="#48c848" stroke="#222" stroke-width="1.1"/>
<circle cx="952.0" cy="346.6" r="3.8" fill="#48c848" stroke="#222" stroke-width="1.1"/>
<circle cx="956.0" cy="350.0" r="3.8" fill="#48c848" stroke="#222" stroke-width="1.1"/>
<circle cx="961.3" cy="354.7" r="3.8" fill="#48c848" stroke="#222" stroke-width="1.1"/>
<circle cx="964.0" cy="359.0" r="3.8" fill="#48c848" stroke="#222" stroke-width="1.1"/>
<circle cx="966.4" cy="363.0" r="3.8" fill="#48c848" stroke="#222" stroke-width="1.1"/>
<circle cx="968.0" cy="367.0" r="3.8" fill="#48c848" stroke="#222" stroke-width="1.1"/>
<circle cx="969.5" cy="371.0" r="3.8" fill="#48c848" stroke="#222" stroke-width="1.1"/>
<circle cx="970.0" cy="375.0" r="3.8" fill="#48c848" stroke="#222" stroke-width="1.1"/>
<circle cx="970.5" cy="379.0" r="3.8" fill="#48c848" stroke="#222" stroke-width="1.1"/>
<circle cx="971.0" cy="382.0" r="3.8" fill="#48c848" stroke="#222" stroke-width="1.1"/>
<circle cx="972.5" cy="386.0" r="3.8" fill="#48c848" stroke="#222" stroke-width="1.1"/>
<circle cx="968.0" cy="387.3" r="3.8" fill="#48c848" stroke="#222" stroke-width="1.1"/>
<circle cx="973.5" cy="397.5" r="3.8" fill="#48c848" stroke="#222" stroke-width="1.1"/>
<circle cx="947.0" cy="361.4" r="3.8" fill="#48c848" stroke="#222" stroke-width="1.1"/>
<circle cx="969.7" cy="442.8" r="3.8" fill="#ffff00" stroke="#222" stroke-width="1.1"/>
<circle cx="994.0" cy="449.5" r="3.8" fill="#ffff00" stroke="#222" stroke-width="1.1"/>
<circle cx="962.8" cy="462.6" r="3.8" fill="#ffff00" stroke="#222" stroke-width="1.1"/>
<circle cx="956.9" cy="475.5" r="3.8" fill="#ffff00" stroke="#222" stroke-width="1.1"/>
<circle cx="969.5" cy="495.0" r="3.8" fill="#ffff00" stroke="#222" stroke-width="1.1"/>
<circle cx="1023.0" cy="474.7" r="3.8" fill="#ffff00" stroke="#222" stroke-width="1.1"/>
<circle cx="1033.9" cy="483.6" r="3.8" fill="#ffff00" stroke="#222" stroke-width="1.1"/>
<circle cx="1037.9" cy="489.0" r="3.8" fill="#ffff00" stroke="#222" stroke-width="1.1"/>
<circle cx="1053.9" cy="498.7" r="3.8" fill="#ffff00" stroke="#222" stroke-width="1.1"/>
<circle cx="1074.9" cy="509.9" r="3.8" fill="#ffff00" stroke="#222" stroke-width="1.1"/>
<circle cx="1087.9" cy="515.9" r="3.8" fill="#ffff00" stroke="#222" stroke-width="1.1"/>
<circle cx="921.0" cy="505.7" r="3.8" fill="#ffff00" stroke="#222" stroke-width="1.1"/>
<circle cx="926.0" cy="504.5" r="3.8" fill="#ffff00" stroke="#222" stroke-width="1.1"/>
<circle cx="930.0" cy="503.5" r="3.8" fill="#ffff00" stroke="#222" stroke-width="1.1"/>
<circle cx="937.0" cy="501.5" r="3.8" fill="#ffff00" stroke="#222" stroke-width="1.1"/>
<circle cx="941.0" cy="500.0" r="3.8" fill="#ffff00" stroke="#222" stroke-width="1.1"/>
<path d="M976.5 481L987 491.4L976.5 501.8L966 491.4z" fill="#e01f27" stroke="#8a0e14" stroke-width="1.4"/>
<rect x="314.5" y="163.5" width="797" height="850" fill="none" stroke="#a8a8a8"/></svg>
<div style="position:absolute;left:314px;top:163px;width:798px;height:43px;box-sizing:border-box;background:#dff0d8;border-top:1.5px solid #8a958a;border-bottom:1px solid #8a958a;border-right:1px solid #8a958a;"></div>
<div class="t" style="left:832.00px;top:178.15px;font-size:14px;line-height:14px;color:#2b8a18;letter-spacing:0.568px;">/utilisateur/lab1/</div>
<div style="position:absolute;left:832px;top:192px;width:108px;height:1.2px;box-sizing:border-box;background:#2b8a18;"></div>
<svg style="left:1023px;top:171px" width="14" height="14" viewBox="0 0 14 14"><rect x="0" y="0" width="13" height="13" fill="#f8fbf6"/><path d="M13 0v13.5H0" stroke="#777" stroke-width="1.6" fill="none"/><path d="M2.5 7.5h6l-3-3.5z" fill="#444"/></svg>
<svg style="left:1023px;top:190px" width="14" height="14" viewBox="0 0 14 14"><rect x="0" y="0" width="13" height="13" fill="#f8fbf6"/><path d="M13 0v13.5H0" stroke="#777" stroke-width="1.6" fill="none"/><path d="M2.5 4.5h6l-3 3.5z" fill="#444"/></svg>
<svg style="left:1071px;top:175px" width="18" height="18" viewBox="0 0 18 18"><circle cx="9" cy="9" r="8.5" fill="#2f342f"/><path d="M5.5 5.5l7 7M12.5 5.5l-7 7" stroke="#fff" stroke-width="2.2"/></svg>
<div class="t" style="left:1122.00px;top:168.15px;font-size:14px;line-height:14px;color:#1b1b1b;letter-spacing:0.515px;">Résultats de l'identification</div>
<svg style="left:1369px;top:169px" width="28" height="12" viewBox="0 0 28 12"><rect x="0.5" y="0.5" width="11" height="11" rx="2" fill="none" stroke="#555"/><rect x="3" y="4.5" width="5" height="4.5" fill="none" stroke="#555" stroke-width="0.9"/><path d="M4.5 4.5v-2h5v4.5h-1.5" fill="none" stroke="#555" stroke-width="0.9"/><rect x="14.5" y="0.5" width="12" height="11" rx="2" fill="none" stroke="#555"/><path d="M17.5 3l6 6M23.5 3l-6 6" stroke="#333" stroke-width="1.6"/></svg>
<svg style="left:1127px;top:193px" width="15" height="15" viewBox="0 0 15 15"><rect x="0.5" y="0.5" width="13" height="13" rx="1" fill="#f2f2f2" stroke="#d8d8d8"/><rect x="3" y="3" width="8" height="3" rx="1" fill="none" stroke="#d8d8d8"/><rect x="3" y="8" width="8" height="3" rx="1" fill="none" stroke="#d8d8d8"/></svg>
<div style="position:absolute;left:1149px;top:194px;width:1px;height:14px;box-sizing:border-box;background:#d0d0d0;"></div>
<div style="position:absolute;left:1227px;top:194px;width:1px;height:14px;box-sizing:border-box;background:#d0d0d0;"></div>
<div style="position:absolute;left:1258px;top:194px;width:1px;height:14px;box-sizing:border-box;background:#d0d0d0;"></div>
<div style="position:absolute;left:1312px;top:194px;width:1px;height:14px;box-sizing:border-box;background:#d0d0d0;"></div>
<svg style="left:1157px;top:192px" width="18" height="17" viewBox="0 0 18 17"><path d="M1 1h4M1 1v14h4" stroke="#888" fill="none"/><rect x="3" y="5" width="3" height="3" fill="#f08a10"/><rect x="3" y="11" width="3" height="3" fill="#f08a10"/><path d="M10 1v8H7l5 6 5-6h-3V1z" fill="#4a82c8" stroke="#2a5a98" stroke-width="0.6"/></svg>
<svg style="left:1181px;top:192px" width="18" height="17" viewBox="0 0 18 17"><path d="M1 1h4M1 1v14h4" stroke="#888" fill="none"/><rect x="3" y="5" width="3" height="3" fill="#f08a10"/><rect x="3" y="11" width="3" height="3" fill="#f08a10"/><path d="M10 15V7H7l5-6 5 6h-3v8z" fill="#4a82c8" stroke="#2a5a98" stroke-width="0.6"/></svg>
<svg style="left:1205px;top:192px" width="18" height="17" viewBox="0 0 18 17"><path d="M6 1l1.6 3.4 3.7 0.4-2.8 2.5 0.8 3.6L6 9.1 2.7 10.9l0.8-3.6L0.7 4.8l3.7-0.4z" fill="#f7d82a" stroke="#d0a000" stroke-width="0.6"/><rect x="3" y="11" width="3" height="3" fill="#f08a10"/><path d="M10 1v8H7l5 6 5-6h-3V1z" fill="#4a82c8" stroke="#2a5a98" stroke-width="0.6"/></svg>
<svg style="left:1234px;top:192px" width="17" height="17" viewBox="0 0 17 17"><rect x="0.5" y="0.5" width="10" height="10" fill="#fde84f" stroke="#c8a000"/><rect x="3.5" y="3.5" width="10" height="10" fill="#fde84f" stroke="#c8a000"/><rect x="8.5" y="8.5" width="8" height="8" rx="1.5" fill="#e02828"/><path d="M10.5 14.5l4-4" stroke="#fff" stroke-width="1.2"/></svg>
<svg style="left:1265px;top:192px" width="15" height="16" viewBox="0 0 15 16"><rect x="3.5" y="0.5" width="9" height="11" fill="#f4f4f4" stroke="#dadada"/><rect x="0.5" y="3.5" width="9" height="11" fill="#f4f4f4" stroke="#dadada"/></svg>
<svg style="left:1289px;top:193px" width="16" height="15" viewBox="0 0 16 15"><rect x="3.5" y="0.5" width="9" height="4" fill="#f4f4f4" stroke="#d6d6d6"/><rect x="0.5" y="4.5" width="15" height="7" rx="2" fill="#d8d8d8"/><rect x="3.5" y="9.5" width="9" height="5" fill="#f4f4f4" stroke="#d6d6d6"/></svg>
<svg style="left:1318px;top:192px" width="18" height="18" viewBox="0 0 18 18"><rect x="0.5" y="0.5" width="15" height="15" fill="none" stroke="#666" stroke-dasharray="1.5 1.5"/><circle cx="5" cy="5" r="4.5" fill="#4a86d0"/><text x="3.6" y="8" font-size="7" fill="#fff" font-weight="700" font-style="italic" font-family="Liberation Serif">i</text><path d="M8 7v10l2.3-2.2 2 3.2 1.3-0.8-2-3.2h3.2z" fill="#fff" stroke="#555" stroke-width="0.8"/></svg>
<svg style="left:1339px;top:199px" width="9" height="5" viewBox="0 0 9 5"><path d="M0.5 0.5h8l-4 4z" fill="#555"/></svg>
<svg style="left:1354px;top:192px" width="19" height="19" viewBox="0 0 19 19"><path d="M4 1a4 4 0 0 0-3 5l2-1.3 2 0.8 0.4 2-1.3 1.7a4 4 0 0 0 4.8-3.4z" fill="#e8e8e8" stroke="#6a6a6a" stroke-width="0.9"/><path d="M7 7.5l10 9" stroke="#3a3a3a" stroke-width="3.8" stroke-linecap="round"/><path d="M8.3 8.6l8.6 7.8" stroke="#ecd77a" stroke-width="2.2"/></svg>
<svg style="left:1384px;top:195px" width="10" height="10" viewBox="0 0 10 10"><path d="M1 1.5l3 3.5-3 3.5M5.5 1.5l3 3.5-3 3.5" stroke="#333" stroke-width="1.2" fill="none"/></svg>
<div style="position:absolute;left:1118px;top:216px;width:279px;height:727px;box-sizing:border-box;background:#fff;border:1px solid #b5b5b5;"></div>
<svg style="left:1115px;top:582px" width="2" height="18" viewBox="0 0 2 18"><rect x="0" y="0" width="1" height="1" fill="#999"/><rect x="0" y="3" width="1" height="1" fill="#999"/><rect x="0" y="6" width="1" height="1" fill="#999"/><rect x="0" y="9" width="1" height="1" fill="#999"/><rect x="0" y="12" width="1" height="1" fill="#999"/><rect x="0" y="15" width="1" height="1" fill="#999"/></svg>
<div style="position:absolute;left:1119px;top:217px;width:277px;height:23px;box-sizing:border-box;background:linear-gradient(#fbfbfb,#eaeaea);border-bottom:1px solid #c2c2c2;"></div>
<div style="position:absolute;left:1218px;top:218px;width:1px;height:21px;box-sizing:border-box;background:#cdcdcd;"></div>
<div class="t" style="left:1121.00px;top:222.15px;font-size:14px;line-height:14px;color:#111;letter-spacing:0.582px;">Entité</div>
<div class="t" style="left:1221.00px;top:222.15px;font-size:14px;line-height:14px;color:#111;letter-spacing:0.467px;">Valeur</div>
<div class="t" style="left:1123.00px;top:956.15px;font-size:14px;line-height:14px;color:#1b1b1b;letter-spacing:0.566px;">Mode</div>
<div style="position:absolute;left:1167px;top:949px;width:225px;height:27px;box-sizing:border-box;background:linear-gradient(#fdfdfd,#ececec);border:1px solid #b4b4b4;border-radius:3px;"></div>
<div class="t" style="left:1172.00px;top:956.15px;font-size:14px;line-height:14px;color:#111;letter-spacing:0.302px;">Couche courante</div>
<svg style="left:1377px;top:960px" width="9" height="5" viewBox="0 0 9 5"><path d="M0.5 0.5h8l-4 4z" fill="#555"/></svg>
<div class="t" style="left:1123.00px;top:988.65px;font-size:14px;line-height:14px;color:#b9b9b9;letter-spacing:0.244px;">Vue</div>
<div style="position:absolute;left:1155px;top:981px;width:124px;height:27px;box-sizing:border-box;background:#efefef;border:1px solid #d2d2d2;border-radius:3px;"></div>
<div class="t" style="left:1160.00px;top:988.65px;font-size:14px;line-height:14px;color:#bcbcbc;letter-spacing:0.315px;">Arborescence</div>
<svg style="left:1262px;top:992px" width="9" height="5" viewBox="0 0 9 5"><path d="M0.5 0.5h8l-4 4z" fill="#c8c8c8"/></svg>
<div style="position:absolute;left:7px;top:1017px;width:325px;height:27px;box-sizing:border-box;background:#fff;border:1px solid #b4b4b4;border-radius:3px;"></div>
<svg style="left:15px;top:1023px" width="14" height="14" viewBox="0 0 14 14"><circle cx="5.5" cy="5.5" r="4.3" fill="none" stroke="#777" stroke-width="1.2"/><path d="M8.5 8.5l4 4" stroke="#777" stroke-width="1.5"/></svg>
<div class="t" style="left:36.00px;top:1024.15px;font-size:14px;line-height:14px;color:#7a7a7a;letter-spacing:0.457px;">Taper pour trouver (Ctrl+K)</div>
<div class="t" style="left:339.50px;top:1025.00px;font-size:13px;line-height:13px;color:#1b1b1b;letter-spacing:-0.626px;">1 entrée de légende supprimées</div>
<div class="t" style="left:516.00px;top:1025.00px;font-size:13px;line-height:13px;color:#1b1b1b;letter-spacing:-0.690px;">Coordonnée</div>
<div style="position:absolute;left:585px;top:1019px;width:114px;height:24px;box-sizing:border-box;background:#fff;border:1px solid #b4b4b4;border-radius:3px;"></div>
<div class="t" style="left:594.00px;top:1025.00px;font-size:13px;line-height:13px;color:#111;letter-spacing:-0.478px;">-506474 6159661</div>
<svg style="left:702px;top:1022px" width="17" height="17" viewBox="0 0 17 17"><path d="M4 3q3-3 6 0l2 4q1 4-2 6q-4 2-7-1q-2-3 0-5z" fill="#bbb" stroke="#333" stroke-width="1"/><circle cx="10" cy="12" r="2.5" fill="#fff" stroke="#222"/><path d="M13 2l3-1" stroke="#555"/></svg>
<div class="t" style="left:732.00px;top:1025.00px;font-size:13px;line-height:13px;color:#1b1b1b;letter-spacing:-0.713px;">Échelle</div>
<div style="position:absolute;left:775px;top:1017px;width:100px;height:27px;box-sizing:border-box;background:#fff;border:1px solid #b4b4b4;border-radius:3px;"></div>
<div style="position:absolute;left:854px;top:1018px;width:1px;height:25px;box-sizing:border-box;background:#d0d0d0;"></div>
<div class="t" style="left:778.00px;top:1025.00px;font-size:13px;line-height:13px;color:#111;letter-spacing:-0.768px;">1:52903</div>
<svg style="left:860px;top:1028px" width="9" height="5" viewBox="0 0 9 5"><path d="M0.5 0.5h8l-4 4z" fill="#555"/></svg>
<svg style="left:886px;top:1021px" width="13" height="18" viewBox="0 0 13 18"><path d="M3 8V5a3.5 3.5 0 0 1 7 0v3" stroke="#555" stroke-width="1.6" fill="none"/><rect x="1" y="8" width="11" height="9" rx="1.5" fill="#5a5a5a"/></svg>
<div class="t" style="left:908.00px;top:1025.00px;font-size:13px;line-height:13px;color:#1b1b1b;letter-spacing:-0.922px;">Loupe</div>
<div style="position:absolute;left:944px;top:1018px;width:95px;height:26px;box-sizing:border-box;background:#fff;border:1px solid #b4b4b4;border-radius:3px;"></div>
<div class="t" style="left:949.00px;top:1025.00px;font-size:13px;line-height:13px;color:#111;letter-spacing:-0.643px;">100%</div>
<svg style="left:1025px;top:1019px" width="12" height="24" viewBox="0 0 12 24"><path d="M0.5 0v24" stroke="#cfcfcf"/><path d="M3 9.5h7l-3.5-4z M3 14.5h7l-3.5 4z" fill="#555"/></svg>
<div class="t" style="left:1048.00px;top:1025.00px;font-size:13px;line-height:13px;color:#1b1b1b;letter-spacing:-0.456px;">Rotation</div>
<div style="position:absolute;left:1103px;top:1018px;width:95px;height:26px;box-sizing:border-box;background:#fff;border:1px solid #b4b4b4;border-radius:3px;"></div>
<div class="t" style="left:1108.00px;top:1025.00px;font-size:13px;line-height:13px;color:#111;letter-spacing:-0.418px;">0,0 °</div>
<svg style="left:1184px;top:1019px" width="12" height="24" viewBox="0 0 12 24"><path d="M0.5 0v24" stroke="#cfcfcf"/><path d="M3 9.5h7l-3.5-4z M3 14.5h7l-3.5 4z" fill="#555"/></svg>
<svg style="left:1204px;top:1024px" width="14" height="14" viewBox="0 0 14 14"><rect x="0.5" y="0.5" width="13" height="13" rx="1" fill="#fff" stroke="#8c8c8c" stroke-width="1"/><path d="M3 6.8l2.6 3.6L10.5 2.8" stroke="#111" stroke-width="1.9" fill="none" stroke-linecap="square"/></svg>
<div class="t" style="left:1223.00px;top:1025.00px;font-size:13px;line-height:13px;color:#1b1b1b;letter-spacing:-0.957px;">Rendu</div>
<svg style="left:1273px;top:1023px" width="16" height="16" viewBox="0 0 16 16"><circle cx="8" cy="8" r="6.8" fill="none" stroke="#555" stroke-width="1"/><ellipse cx="8" cy="8" rx="3" ry="6.8" fill="none" stroke="#555" stroke-width="0.9"/><path d="M1.2 8h13.6M2.5 4.5h11M2.5 11.5h11" stroke="#555" stroke-width="0.9"/></svg>
<div class="t" style="left:1291.00px;top:1025.00px;font-size:13px;line-height:13px;color:#1b1b1b;letter-spacing:-1.254px;">EPSG:3857</div>
<svg style="left:1374px;top:1022px" width="17" height="17" viewBox="0 0 17 17"><path d="M8.5 1.5c4.5 0 7.5 2.8 7.5 6.2s-3 6.2-7.5 6.2c-0.8 0-1.5-0.1-2.2-0.2L3 16l0.8-3.4C2 11.5 1 9.8 1 7.7 1 4.3 4 1.5 8.5 1.5z" fill="#555"/><circle cx="5" cy="7.7" r="1.1" fill="#fff"/><circle cx="8.5" cy="7.7" r="1.1" fill="#fff"/><circle cx="12" cy="7.7" r="1.1" fill="#fff"/></svg>
<div style="position:absolute;left:50px;top:82px;width:782px;height:556px;box-sizing:border-box;background:#efefef;border-radius:0 0 4px 4px;"></div>
<svg style="left:57.5px;top:86.5px" width="23" height="23" viewBox="0 0 23 23"><path d="M14.1 18.1A8.6 8.6 0 1 1 18.3 13.9" stroke="#89b52c" stroke-width="3.8" fill="none"/><path d="M8.6 8.1L13.8 10.2L21.4 17.8L17.8 21.4L10.2 13.8Z" fill="#62a744"/><path d="M8.6 8.1L11.9 9.4L9.4 11.9Z" fill="#ef7d22"/><path d="M11.9 9.4L13.8 10.2L10.2 13.8L9.4 11.9Z" fill="#f1d12c"/></svg>
<div class="t" style="left:357.00px;top:90.15px;font-size:14px;line-height:14px;color:#b0b0b0;letter-spacing:-0.178px;">Coordonnée(s) moyenne(s)</div>
<svg style="left:762px;top:89px" width="60" height="16" viewBox="0 0 60 16"><path d="M2 11.5h9.5" stroke="#b3b3b3" stroke-width="1.5"/><rect x="25.5" y="4.5" width="10" height="8" stroke="#b3b3b3" fill="none" stroke-width="1.2"/><path d="M48.5 3.5l9 9M57.5 3.5l-9 9" stroke="#b3b3b3" stroke-width="1.5"/></svg>
<svg style="left:636px;top:125px" width="6" height="9" viewBox="0 0 6 9"><path d="M0.5 0.5l5 4-5 4z" fill="#444"/></svg>
<svg style="left:640px;top:322px" width="3" height="18" viewBox="0 0 3 18"><rect x="0" y="0" width="1" height="1" fill="#aaa"/><rect x="0" y="3" width="1" height="1" fill="#aaa"/><rect x="0" y="6" width="1" height="1" fill="#aaa"/><rect x="0" y="9" width="1" height="1" fill="#aaa"/><rect x="0" y="12" width="1" height="1" fill="#aaa"/><rect x="0" y="15" width="1" height="1" fill="#aaa"/></svg>
<div style="position:absolute;left:64px;top:152px;width:569px;height:381px;box-sizing:border-box;border:1px solid #bcbcbc;background:#efefef;"></div>
<div style="position:absolute;left:165px;top:125px;width:74px;height:28px;box-sizing:border-box;background:linear-gradient(#ececec,#e0e0e0);border:1px solid #c2c2c2;border-bottom:none;border-radius:3px 3px 0 0;"></div>
<div style="position:absolute;left:64px;top:123px;width:102px;height:31px;box-sizing:border-box;background:linear-gradient(#fefefe,#f7f7f7);border:1px solid #bcbcbc;border-bottom:none;border-radius:3px 3px 0 0;"></div>
<div style="position:absolute;left:65px;top:152px;width:100px;height:2px;box-sizing:border-box;background:#f7f7f7;"></div>
<div class="t" style="left:76.00px;top:132.15px;font-size:14px;line-height:14px;color:#1b1b1b;letter-spacing:0.383px;">Paramètres</div>
<div class="t" style="left:178.00px;top:132.65px;font-size:14px;line-height:14px;color:#1b1b1b;letter-spacing:0.320px;">Journal</div>
<div class="t" style="left:70.50px;top:160.75px;font-size:14px;line-height:14px;color:#1b1b1b;letter-spacing:0.171px;">Couche source</div>
<div style="position:absolute;left:70px;top:183px;width:450px;height:27px;box-sizing:border-box;background:linear-gradient(#fdfdfd,#ececec);border:1px solid #b4b4b4;border-radius:3px;"></div>
<svg style="left:75px;top:188px" width="15" height="15" viewBox="0 0 15 15"><circle cx="2.5" cy="12" r="1.4" fill="none" stroke="#8a8a8a" stroke-width="0.8"/><circle cx="5.5" cy="7" r="1.4" fill="none" stroke="#8a8a8a" stroke-width="0.8"/><circle cx="10.5" cy="3" r="1.4" fill="none" stroke="#8a8a8a" stroke-width="0.8"/></svg>
<div class="t" style="left:95.40px;top:189.15px;font-size:14px;line-height:14px;color:#111;letter-spacing:0.308px;">dataAvecQualitéSignal [EPSG:4326]</div>
<svg style="left:504px;top:194px" width="9" height="5" viewBox="0 0 9 5"><path d="M0.5 0.5h8l-4 4z" fill="#555"/></svg>
<svg style="left:529px;top:185px" width="24" height="21" viewBox="0 0 24 21"><path d="M7 4H4.5a2.5 2.5 0 0 0-2.5 2.5v7.5a2.5 2.5 0 0 0 2.5 2.5H10M14 16.5h3.5a2.5 2.5 0 0 0 2.5-2.5V6.5A2.5 2.5 0 0 0 17.5 4H10" stroke="#5aa85a" stroke-width="4.2" fill="none"/><path d="M7 4H4.5a2.5 2.5 0 0 0-2.5 2.5v7.5a2.5 2.5 0 0 0 2.5 2.5H10M14 16.5h3.5a2.5 2.5 0 0 0 2.5-2.5V6.5A2.5 2.5 0 0 0 17.5 4H10" stroke="#74bd74" stroke-width="2.4" fill="none"/><path d="M11 0.5L6.5 4 11 7.5z M9.5 13L14 16.5 9.5 20z" fill="#68b468" stroke="#4a9a4a" stroke-width="0.8"/></svg>
<svg style="left:565px;top:184px" width="25" height="24" viewBox="0 0 25 24"><path d="M5 1.5a4.5 4.5 0 0 0-3.5 5.5l2-1.5 2.5 1 0.5 2.5-1.5 2a4.5 4.5 0 0 0 5.5-4z" fill="#e8e8e8" stroke="#6a6a6a" stroke-width="1"/><path d="M9 9.5l13.5 12" stroke="#3a3a3a" stroke-width="4.6" stroke-linecap="round"/><path d="M10.5 10.8l11.8 10.5" stroke="#ecd77a" stroke-width="3"/></svg>
<div style="position:absolute;left:598px;top:183px;width:29px;height:26px;box-sizing:border-box;background:linear-gradient(#fdfdfd,#ececec);border:1px solid #b4b4b4;border-radius:3px;"></div><svg style="left:606px;top:199px" width="20" height="8" viewBox="0 0 20 8"><circle cx="1.5" cy="1.7" r="1.3" fill="#111"/><circle cx="6.2" cy="1.7" r="1.3" fill="#111"/><circle cx="11.3" cy="1.7" r="1.3" fill="#111"/><path d="M11.5 3.5h5l-2.5 2.5z" fill="#555"/></svg>
<svg style="left:70px;top:221px" width="14" height="14" viewBox="0 0 14 14"><rect x="0.5" y="0.5" width="13" height="13" rx="1" fill="#fff" stroke="#8c8c8c" stroke-width="1"/><path d="M3 6.8l2.6 3.6L10.5 2.8" stroke="#111" stroke-width="1.9" fill="none" stroke-linecap="square"/></svg>
<div class="t" style="left:89.20px;top:222.15px;font-size:14px;line-height:14px;color:#111;letter-spacing:0.403px;">Entité(s) sélectionnée(s) uniquement</div>
<div class="t" style="left:70.50px;top:250.15px;font-size:14px;line-height:14px;color:#1b1b1b;letter-spacing:0.558px;">Champ de pondération [optionnel]</div>
<div style="position:absolute;left:70px;top:272px;width:557px;height:27px;box-sizing:border-box;background:linear-gradient(#fdfdfd,#ececec);border:1px solid #b4b4b4;border-radius:3px;"></div>
<div class="t" style="left:76.30px;top:279.80px;font-size:8.5px;line-height:8.5px;color:#333;letter-spacing:0.327px;">123</div>
<div class="t" style="left:95.40px;top:278.15px;font-size:14px;line-height:14px;color:#111;letter-spacing:0.341px;">signapos</div>
<svg style="left:612px;top:283px" width="9" height="5" viewBox="0 0 9 5"><path d="M0.5 0.5h8l-4 4z" fill="#555"/></svg>
<div class="t" style="left:70.50px;top:307.85px;font-size:14px;line-height:14px;color:#1b1b1b;letter-spacing:0.586px;">Champ d'identifiant unique [optionnel]</div>
<div style="position:absolute;left:70px;top:330px;width:557px;height:27px;box-sizing:border-box;background:linear-gradient(#fdfdfd,#ececec);border:1px solid #b4b4b4;border-radius:3px;"></div>
<svg style="left:612px;top:341px" width="9" height="5" viewBox="0 0 9 5"><path d="M0.5 0.5h8l-4 4z" fill="#555"/></svg>
<div class="t" style="left:70.50px;top:365.75px;font-size:14px;line-height:14px;color:#1b1b1b;letter-spacing:0.382px;">Coordonnées moyennes</div>
<div style="position:absolute;left:70px;top:388px;width:522px;height:27px;box-sizing:border-box;background:#fff;border:1px solid #b4b4b4;border-radius:3px;"></div>
<div class="t" style="left:73.20px;top:394.75px;font-size:14px;line-height:14px;color:#8c8c8c;letter-spacing:0.425px;">[Créer une couche temporaire]</div>
<div style="position:absolute;left:598px;top:388px;width:29px;height:26px;box-sizing:border-box;background:linear-gradient(#fdfdfd,#ececec);border:1px solid #b4b4b4;border-radius:3px;"></div><svg style="left:606px;top:404px" width="20" height="8" viewBox="0 0 20 8"><circle cx="1.5" cy="1.7" r="1.3" fill="#111"/><circle cx="6.2" cy="1.7" r="1.3" fill="#111"/><circle cx="11.3" cy="1.7" r="1.3" fill="#111"/><path d="M11.5 3.5h5l-2.5 2.5z" fill="#555"/></svg>
<svg style="left:70px;top:426px" width="14" height="14" viewBox="0 0 14 14"><rect x="0.5" y="0.5" width="13" height="13" rx="1" fill="#fff" stroke="#8c8c8c" stroke-width="1"/><path d="M3 6.8l2.6 3.6L10.5 2.8" stroke="#111" stroke-width="1.9" fill="none" stroke-linecap="square"/></svg>
<div class="t" style="left:89.20px;top:425.85px;font-size:14px;line-height:14px;color:#111;letter-spacing:0.451px;">Ouvrir le fichier en sortie après l'exécution de l'algorithme</div>
<div style="position:absolute;left:649px;top:123px;width:169px;height:411px;box-sizing:border-box;background:#fff;border:1px solid #b4b4b4;"></div>
<div style="position:absolute;left:803px;top:124px;width:14px;height:409px;box-sizing:border-box;background:#fafafa;border-left:1px solid #cfcfcf;"></div>
<div style="position:absolute;left:804px;top:396px;width:12px;height:124px;box-sizing:border-box;background:#dedede;"></div>
<svg style="left:806px;top:127px" width="9" height="6" viewBox="0 0 9 6"><path d="M0.5 5.5h8l-4-5z" fill="#555"/></svg>
<svg style="left:806px;top:523px" width="9" height="6" viewBox="0 0 9 6"><path d="M0.5 0.5h8l-4 5z" fill="#555"/></svg>
<div style="position:absolute;left:803px;top:137px;width:14px;height:1px;box-sizing:border-box;background:#e2e2e2;"></div>
<div style="position:absolute;left:803px;top:520px;width:14px;height:1px;box-sizing:border-box;background:#e2e2e2;"></div>
<div class="t" style="left:654.70px;top:130.38px;font-size:22px;line-height:22px;color:#4d4d4d;font-weight:700;letter-spacing:-0.792px;">Coordonnée(s</div>
<div class="t" style="left:654.70px;top:155.68px;font-size:22px;line-height:22px;color:#4d4d4d;font-weight:700;letter-spacing:-0.775px;">) moyenne(s)</div>
<div class="t" style="left:654.50px;top:196.15px;font-size:14px;line-height:14px;color:#555;letter-spacing:0.560px;">Cet algorithme</div>
<div class="t" style="left:654.50px;top:213.95px;font-size:14px;line-height:14px;color:#555;letter-spacing:0.179px;">calcule une couche de</div>
<div class="t" style="left:654.50px;top:231.75px;font-size:14px;line-height:14px;color:#555;letter-spacing:0.323px;">point avec le centre</div>
<div class="t" style="left:654.50px;top:249.55px;font-size:14px;line-height:14px;color:#555;letter-spacing:0.249px;">de gravité des</div>
<div class="t" style="left:654.50px;top:267.35px;font-size:14px;line-height:14px;color:#555;letter-spacing:0.354px;">géométries dans une</div>
<div class="t" style="left:654.50px;top:285.15px;font-size:14px;line-height:14px;color:#555;letter-spacing:0.369px;">couche d'entrée.</div>
<div class="t" style="left:654.30px;top:317.15px;font-size:14px;line-height:14px;color:#555;letter-spacing:0.549px;">Un attribut peut être</div>
<div class="t" style="left:654.30px;top:335.10px;font-size:14px;line-height:14px;color:#555;letter-spacing:0.448px;">spécifié comme</div>
<div class="t" style="left:654.30px;top:353.05px;font-size:14px;line-height:14px;color:#555;letter-spacing:0.476px;">contenant une</div>
<div class="t" style="left:654.30px;top:371.00px;font-size:14px;line-height:14px;color:#555;letter-spacing:0.454px;">pondération à</div>
<div class="t" style="left:654.30px;top:388.95px;font-size:14px;line-height:14px;color:#555;letter-spacing:0.320px;">appliquer à chaque</div>
<div class="t" style="left:654.30px;top:406.90px;font-size:14px;line-height:14px;color:#555;letter-spacing:0.432px;">entité lors du calcul</div>
<div class="t" style="left:654.30px;top:424.85px;font-size:14px;line-height:14px;color:#555;letter-spacing:0.345px;">du centre de gravité.</div>
<div class="t" style="left:654.30px;top:455.85px;font-size:14px;line-height:14px;color:#555;letter-spacing:0.391px;">Si un attribut est</div>
<div class="t" style="left:654.30px;top:473.85px;font-size:14px;line-height:14px;color:#555;letter-spacing:0.332px;">sélectionné dans le</div>
<div class="t" style="left:654.30px;top:491.85px;font-size:14px;line-height:14px;color:#555;letter-spacing:0.340px;">paramètre , les</div>
<div class="t" style="left:654.30px;top:509.85px;font-size:14px;line-height:14px;color:#555;letter-spacing:0.515px;">entités seront</div>
<div style="position:absolute;left:650px;top:525px;width:153px;height:8px;overflow:hidden"><div class="t" style="left:4.3px;top:2.6px;font-size:14px;line-height:14px;color:#555;letter-spacing:0.33px">regroupées selon les</div></div>
<div style="position:absolute;left:64px;top:565px;width:668px;height:26px;box-sizing:border-box;background:#fff;border:1px solid #b4b4b4;border-radius:3px;"></div>
<div class="t" style="left:387.00px;top:570.85px;font-size:14px;line-height:14px;color:#1b1b1b;letter-spacing:0.510px;">0%</div>
<div style="position:absolute;left:738px;top:564px;width:80px;height:27px;box-sizing:border-box;background:#efefef;border:1px solid #cfcfcf;border-radius:3px;"></div>
<div class="t" style="left:752.00px;top:570.15px;font-size:14px;line-height:14px;color:#b5b5b5;letter-spacing:0.576px;">Annuler</div>
<div style="position:absolute;left:64px;top:597px;width:80px;height:27px;box-sizing:border-box;background:linear-gradient(#fdfdfd,#ececec);border:1px solid #b4b4b4;border-radius:3px;"></div>
<svg style="left:81px;top:603px" width="12" height="15" viewBox="0 0 12 15"><rect x="0.5" y="0.5" width="11" height="14" rx="1" fill="#e8e8e8" stroke="#b0b0b0"/><circle cx="6" cy="8" r="3" fill="none" stroke="#d83a3a" stroke-width="1.3"/><path d="M2 5h8" stroke="#c8c8c8"/></svg>
<div class="t" style="left:97.00px;top:605.15px;font-size:14px;line-height:14px;color:#1b1b1b;letter-spacing:0.280px;">Aide</div>
<div style="position:absolute;left:150px;top:597px;width:266px;height:27px;box-sizing:border-box;background:linear-gradient(#fdfdfd,#ececec);border:1px solid #b4b4b4;border-radius:3px;"></div>
<div class="t" style="left:164.00px;top:605.15px;font-size:14px;line-height:14px;color:#1b1b1b;letter-spacing:0.385px;">Exécuter comme processus de lot…</div>
<div style="position:absolute;left:646px;top:597px;width:80px;height:27px;box-sizing:border-box;background:linear-gradient(#fdfdfd,#ececec);border:1px solid #b4b4b4;border-radius:3px;"></div>
<svg style="left:653px;top:604px" width="13" height="13" viewBox="0 0 13 13"><path d="M2 2l9 9M11 2l-9 9" stroke="#8a8a8a" stroke-width="3.2" stroke-linecap="round"/></svg>
<div class="t" style="left:669.00px;top:605.15px;font-size:14px;line-height:14px;color:#1b1b1b;letter-spacing:0.525px;">Fermer</div>
<div style="position:absolute;left:669px;top:619px;width:8px;height:1px;box-sizing:border-box;background:#1b1b1b;"></div>
<div style="position:absolute;left:732px;top:597px;width:86px;height:27px;box-sizing:border-box;background:linear-gradient(#f5f8fb,#dde5ee);border:1px solid #3a78b8;border-radius:3px;"></div>
<svg style="left:736px;top:601px" width="18" height="19" viewBox="0 0 18 19"><path d="M13 1.5v7l-4 4H7" stroke="#34482a" stroke-width="6.4" fill="none" stroke-linejoin="round"/><path d="M13 1.5v7l-4 4H7" stroke="#66874e" stroke-width="4.4" fill="none" stroke-linejoin="round"/><path d="M8 6.8L1 12.5 8 18.2z" fill="#66874e" stroke="#34482a" stroke-width="0.9"/></svg>
<div class="t" style="left:754.00px;top:605.15px;font-size:14px;line-height:14px;color:#1b1b1b;letter-spacing:0.367px;">Exécuter</div>
</body></html>
